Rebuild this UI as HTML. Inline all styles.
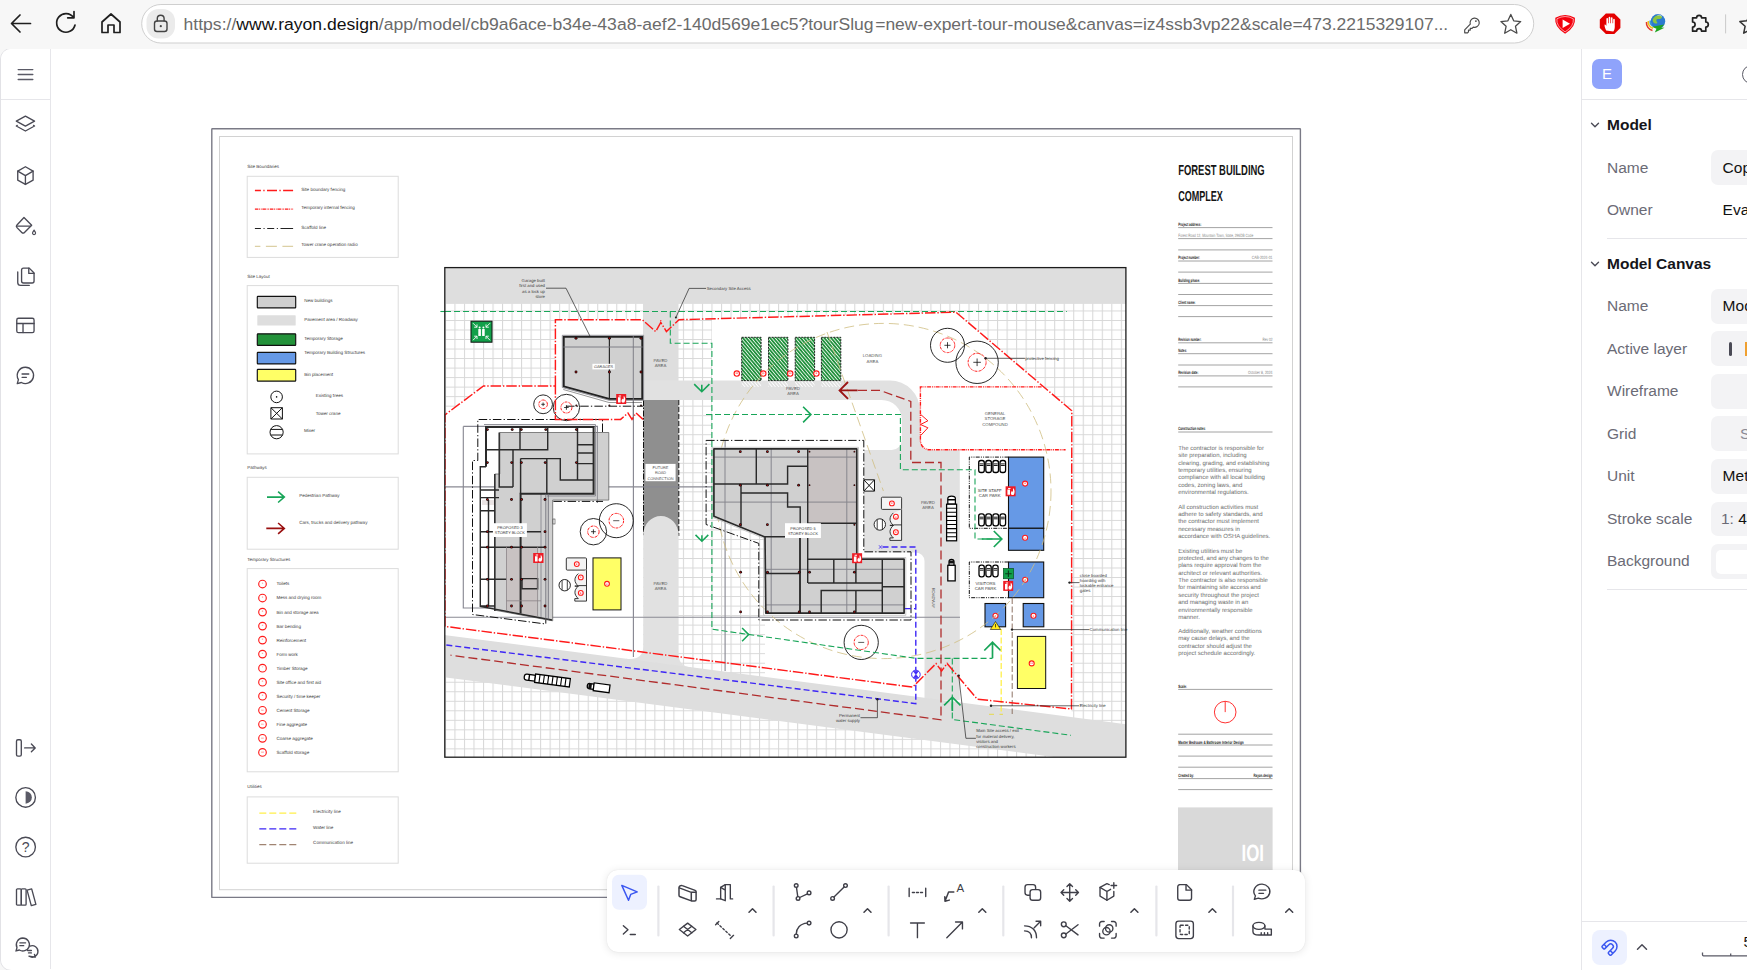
<!DOCTYPE html>
<html lang="en"><head><meta charset="utf-8"><title>Rayon - Forest Building Complex</title>
<style>
*{box-sizing:border-box;margin:0;padding:0}
html,body{width:1747px;height:970px;overflow:hidden;background:#f7f7f7;font-family:"Liberation Sans",sans-serif}
#chrome{position:absolute;left:0;top:0;width:1747px;height:49px;background:#f7f7f7}
#app{position:absolute;left:0;top:48px;width:1760px;height:923px;background:#fff;border:1px solid #e2e2e6;border-top-left-radius:11px;border-bottom-left-radius:11px}
#sidebar{position:absolute;left:1px;top:49px;width:50px;height:920px;background:#fff;border-right:1px solid #e6e6ea;border-top-left-radius:10px;border-bottom-left-radius:10px}
#rpanel{position:absolute;left:0;top:0;width:1747px;height:970px;pointer-events:none}
#rpanel:before{content:"";position:absolute;left:1581px;top:49px;width:166px;height:921px;background:#fff;border-left:1px solid #e6e6ea}
#rpanel .avatar{position:absolute;left:1592.200px;top:59px;width:29.500px;height:29.500px;border-radius:7px;background:#8fa3fb;color:#fff;font-size:15px;text-align:center;line-height:29.500px}
#rpanel .hsep{position:absolute;height:1px;background:#e6e6ea}
#rpanel .hd{position:absolute;left:1607px;font-weight:bold;font-size:15.500px;color:#15151a;line-height:20px;white-space:nowrap}
#rpanel .chev{position:absolute;left:1588.500px}
#rpanel .lbl{position:absolute;left:1607px;font-size:15.500px;color:#6b6b76;line-height:20px;white-space:nowrap}
#rpanel .box{position:absolute;left:1711px;width:60px;border-radius:7px;background:#f3f3f5}
#rpanel .val{position:absolute;font-size:15.500px;line-height:20px;white-space:nowrap}
#toolbar{position:absolute;left:607px;top:870px;width:698px;height:82px;border-radius:11px;background:#fff;box-shadow:0 1px 8px rgba(0,0,0,.10),0 0 1px rgba(0,0,0,.12)}
#canvas{position:absolute;left:0;top:0}
</style></head>
<body>
<div id="app"></div>
<svg id="canvas" width="1747" height="970" viewBox="0 0 1747 970" text-rendering="geometricPrecision"><rect x="211.800" y="128.700" width="1088.600" height="768.700" fill="#fff" stroke="#7a7a86" stroke-width="1.400" rx="0.500"/><rect x="219.500" y="136.500" width="1073" height="753.200" fill="none" stroke="#d2d2d2" stroke-width="1"/><text x="247.2" y="168.3" font-size="4.5" text-anchor="start" fill="#3c3c3c" font-family="Liberation Sans, sans-serif" >Site Boundaries</text><rect x="247.2" y="176.3" width="151" height="81.1" fill="#fff" stroke="#dcdcdc" stroke-width="1"/><path d="M254.900 190.500H293.100" stroke="#ff1a1a" stroke-width="1.300" stroke-dasharray="6 2.400 1.300 2.400 10 2.400 1.300 2.400 13 0" fill="none"/><path d="M254.900 209.200H293.100" stroke="#ff1a1a" stroke-width="1.300" stroke-dasharray="3.500 0.800 0.800 0.800 0.800 0.800" fill="none"/><path d="M254.900 228.500H293.100" stroke="#222" stroke-width="1.200" stroke-dasharray="6 2.600 1.100 2.600 7 2.600 1.100 2.600 13 0" fill="none"/><path d="M254.900 246.300H293.100" stroke="#cfbe82" stroke-width="0.9" stroke-dasharray="5.500 5.500 11 5.500 11 0" fill="none"/><text x="301.3" y="190.9" font-size="4.55" text-anchor="start" fill="#3c3c3c" font-family="Liberation Sans, sans-serif" >Site boundary fencing</text><text x="301.3" y="209.2" font-size="4.55" text-anchor="start" fill="#3c3c3c" font-family="Liberation Sans, sans-serif" >Temporary internal fencing</text><text x="301.3" y="228.5" font-size="4.55" text-anchor="start" fill="#3c3c3c" font-family="Liberation Sans, sans-serif" >Scaffold line</text><text x="301.3" y="246.0" font-size="4.55" text-anchor="start" fill="#3c3c3c" font-family="Liberation Sans, sans-serif" >Tower crane operation radio</text><text x="247.2" y="277.7" font-size="4.5" text-anchor="start" fill="#3c3c3c" font-family="Liberation Sans, sans-serif" >Site Layout</text><rect x="247.2" y="285.6" width="151" height="168.3" fill="#fff" stroke="#dcdcdc" stroke-width="1"/><rect x="257.300" y="296.3" width="38.400" height="11.5" rx="0.600" fill="#cfcfcf" stroke="#111" stroke-width="1.150"/><rect x="257.300" y="315.3" width="38.400" height="10.3" rx="0.600" fill="#dedede"/><rect x="257.300" y="333.8" width="38.400" height="11.5" rx="0.600" fill="#23923a" stroke="#111" stroke-width="1.150"/><rect x="257.300" y="352.4" width="38.400" height="11.5" rx="0.600" fill="#6699e6" stroke="#111" stroke-width="1.150"/><rect x="257.300" y="369.4" width="38.400" height="11.7" rx="0.600" fill="#ffff66" stroke="#111" stroke-width="1.150"/><text x="304.2" y="301.5" font-size="4.55" text-anchor="start" fill="#3c3c3c" font-family="Liberation Sans, sans-serif" >New buildings</text><text x="304.2" y="320.7" font-size="4.55" text-anchor="start" fill="#3c3c3c" font-family="Liberation Sans, sans-serif" >Pavement area / Roadway</text><text x="304.2" y="339.6" font-size="4.55" text-anchor="start" fill="#3c3c3c" font-family="Liberation Sans, sans-serif" >Temporary Storage</text><text x="304.2" y="353.5" font-size="4.55" text-anchor="start" fill="#3c3c3c" font-family="Liberation Sans, sans-serif" >Temporary Building Structures</text><text x="304.2" y="376.1" font-size="4.55" text-anchor="start" fill="#3c3c3c" font-family="Liberation Sans, sans-serif" >Bin placement</text><circle cx="276.600" cy="396.900" r="5.800" fill="#fff" stroke="#111" stroke-width="1"/><circle cx="276.600" cy="396.900" r="0.8" fill="#111"/><path d="M270.900 407.700h11.500v11.300h-11.500zM270.900 407.700l11.500 11.300M282.400 407.700l-11.500 11.300" fill="#fff" stroke="#111" stroke-width="1"/><circle cx="276.600" cy="432.200" r="6.600" fill="#fff" stroke="#111" stroke-width="1"/><path d="M270.600 429.400h12M270.600 435h12" stroke="#111" stroke-width="1"/><text x="315.7" y="396.9" font-size="4.55" text-anchor="start" fill="#3c3c3c" font-family="Liberation Sans, sans-serif" >Existing trees</text><text x="315.7" y="414.5" font-size="4.55" text-anchor="start" fill="#3c3c3c" font-family="Liberation Sans, sans-serif" >Tower crane</text><text x="304.0" y="432.4" font-size="4.55" text-anchor="start" fill="#3c3c3c" font-family="Liberation Sans, sans-serif" >Mixer</text><text x="247.2" y="469.4" font-size="4.5" text-anchor="start" fill="#3c3c3c" font-family="Liberation Sans, sans-serif" >Pathways</text><rect x="247.2" y="477.3" width="151" height="71.9" fill="#fff" stroke="#dcdcdc" stroke-width="1"/><path d="M267 497.100H283.800M278.100 491.700l6.200 5.400-6.200 5.400" fill="none" stroke="#18a558" stroke-width="1.600"/><path d="M266.300 528.400H283.800M278.100 523l6.200 5.400-6.200 5.400" fill="none" stroke="#9a1010" stroke-width="1.600"/><text x="299.2" y="497.2" font-size="4.55" text-anchor="start" fill="#3c3c3c" font-family="Liberation Sans, sans-serif" >Pedestrian Pathway</text><text x="299.2" y="524.1" font-size="4.55" text-anchor="start" fill="#3c3c3c" font-family="Liberation Sans, sans-serif" >Cars, trucks and delivery pathway</text><text x="247.2" y="560.8" font-size="4.5" text-anchor="start" fill="#3c3c3c" font-family="Liberation Sans, sans-serif" >Temporary Structures</text><rect x="247.2" y="568.6" width="151" height="203.2" fill="#fff" stroke="#dcdcdc" stroke-width="1"/><circle cx="262.500" cy="584.0" r="3.800" fill="#fff" stroke="#ff1a1a" stroke-width="1.150"/><text x="262.5" y="584.2" font-size="2.2" text-anchor="middle" fill="#ff1a1a" font-family="Liberation Sans, sans-serif" >1</text><text x="276.4" y="585.4" font-size="4.55" text-anchor="start" fill="#3c3c3c" font-family="Liberation Sans, sans-serif" >Toilets</text><circle cx="262.500" cy="598.0" r="3.800" fill="#fff" stroke="#ff1a1a" stroke-width="1.150"/><text x="262.5" y="598.2" font-size="2.2" text-anchor="middle" fill="#ff1a1a" font-family="Liberation Sans, sans-serif" >2</text><text x="276.4" y="599.4" font-size="4.55" text-anchor="start" fill="#3c3c3c" font-family="Liberation Sans, sans-serif" >Mess and drying room</text><circle cx="262.500" cy="612.1" r="3.800" fill="#fff" stroke="#ff1a1a" stroke-width="1.150"/><text x="262.5" y="612.3" font-size="2.2" text-anchor="middle" fill="#ff1a1a" font-family="Liberation Sans, sans-serif" >3</text><text x="276.4" y="613.5" font-size="4.55" text-anchor="start" fill="#3c3c3c" font-family="Liberation Sans, sans-serif" >Bin and storage area</text><circle cx="262.500" cy="626.1" r="3.800" fill="#fff" stroke="#ff1a1a" stroke-width="1.150"/><text x="262.5" y="626.3" font-size="2.2" text-anchor="middle" fill="#ff1a1a" font-family="Liberation Sans, sans-serif" >4</text><text x="276.4" y="627.5" font-size="4.55" text-anchor="start" fill="#3c3c3c" font-family="Liberation Sans, sans-serif" >Bar bending</text><circle cx="262.500" cy="640.1" r="3.800" fill="#fff" stroke="#ff1a1a" stroke-width="1.150"/><text x="262.5" y="640.3" font-size="2.2" text-anchor="middle" fill="#ff1a1a" font-family="Liberation Sans, sans-serif" >5</text><text x="276.4" y="641.5" font-size="4.55" text-anchor="start" fill="#3c3c3c" font-family="Liberation Sans, sans-serif" >Reinforcement</text><circle cx="262.500" cy="654.1" r="3.800" fill="#fff" stroke="#ff1a1a" stroke-width="1.150"/><text x="262.5" y="654.4" font-size="2.2" text-anchor="middle" fill="#ff1a1a" font-family="Liberation Sans, sans-serif" >6</text><text x="276.4" y="655.5" font-size="4.55" text-anchor="start" fill="#3c3c3c" font-family="Liberation Sans, sans-serif" >Form work</text><circle cx="262.500" cy="668.2" r="3.800" fill="#fff" stroke="#ff1a1a" stroke-width="1.150"/><text x="262.5" y="668.4" font-size="2.2" text-anchor="middle" fill="#ff1a1a" font-family="Liberation Sans, sans-serif" >7</text><text x="276.4" y="669.6" font-size="4.55" text-anchor="start" fill="#3c3c3c" font-family="Liberation Sans, sans-serif" >Timber Storage</text><circle cx="262.500" cy="682.2" r="3.800" fill="#fff" stroke="#ff1a1a" stroke-width="1.150"/><text x="262.5" y="682.4" font-size="2.2" text-anchor="middle" fill="#ff1a1a" font-family="Liberation Sans, sans-serif" >8</text><text x="276.4" y="683.6" font-size="4.55" text-anchor="start" fill="#3c3c3c" font-family="Liberation Sans, sans-serif" >Site office and first aid</text><circle cx="262.500" cy="696.2" r="3.800" fill="#fff" stroke="#ff1a1a" stroke-width="1.150"/><text x="262.5" y="696.4" font-size="2.2" text-anchor="middle" fill="#ff1a1a" font-family="Liberation Sans, sans-serif" >9</text><text x="276.4" y="697.6" font-size="4.55" text-anchor="start" fill="#3c3c3c" font-family="Liberation Sans, sans-serif" >Security / time keeper</text><circle cx="262.500" cy="710.3" r="3.800" fill="#fff" stroke="#ff1a1a" stroke-width="1.150"/><text x="262.5" y="710.5" font-size="2.2" text-anchor="middle" fill="#ff1a1a" font-family="Liberation Sans, sans-serif" >10</text><text x="276.4" y="711.7" font-size="4.55" text-anchor="start" fill="#3c3c3c" font-family="Liberation Sans, sans-serif" >Cement Storage</text><circle cx="262.500" cy="724.3" r="3.800" fill="#fff" stroke="#ff1a1a" stroke-width="1.150"/><text x="262.5" y="724.5" font-size="2.2" text-anchor="middle" fill="#ff1a1a" font-family="Liberation Sans, sans-serif" >11</text><text x="276.4" y="725.7" font-size="4.55" text-anchor="start" fill="#3c3c3c" font-family="Liberation Sans, sans-serif" >Fine aggregate</text><circle cx="262.500" cy="738.3" r="3.800" fill="#fff" stroke="#ff1a1a" stroke-width="1.150"/><text x="262.5" y="738.5" font-size="2.2" text-anchor="middle" fill="#ff1a1a" font-family="Liberation Sans, sans-serif" >12</text><text x="276.4" y="739.7" font-size="4.55" text-anchor="start" fill="#3c3c3c" font-family="Liberation Sans, sans-serif" >Coarse aggregate</text><circle cx="262.500" cy="752.4" r="3.800" fill="#fff" stroke="#ff1a1a" stroke-width="1.150"/><text x="262.5" y="752.6" font-size="2.2" text-anchor="middle" fill="#ff1a1a" font-family="Liberation Sans, sans-serif" >13</text><text x="276.4" y="753.8" font-size="4.55" text-anchor="start" fill="#3c3c3c" font-family="Liberation Sans, sans-serif" >Scaffold storage</text><text x="247.2" y="788.1" font-size="4.5" text-anchor="start" fill="#3c3c3c" font-family="Liberation Sans, sans-serif" >Utilities</text><rect x="247.2" y="796.9" width="151" height="66.3" fill="#fff" stroke="#dcdcdc" stroke-width="1"/><path d="M259.300 813.1H296.400" stroke="#fff04a" stroke-width="1.200" stroke-dasharray="7 3" fill="none"/><text x="313.1" y="812.7" font-size="4.55" text-anchor="start" fill="#3c3c3c" font-family="Liberation Sans, sans-serif" >Electricity line</text><path d="M259.300 828.9H296.400" stroke="#3d26f5" stroke-width="1.200" stroke-dasharray="7 3" fill="none"/><text x="313.1" y="828.5" font-size="4.55" text-anchor="start" fill="#3c3c3c" font-family="Liberation Sans, sans-serif" >Water line</text><path d="M259.300 844.7H296.400" stroke="#a08472" stroke-width="1.200" stroke-dasharray="7 3" fill="none"/><text x="313.1" y="844.3" font-size="4.55" text-anchor="start" fill="#3c3c3c" font-family="Liberation Sans, sans-serif" >Communication line</text><defs><clipPath id="fr"><rect x="444.8" y="267.6" width="681.1" height="489.6"/></clipPath><pattern id="grid" x="444.900" y="300.960" width="9.520" height="9.520" patternUnits="userSpaceOnUse"><path d="M0.500 0V9.520M0 0.500H9.520" stroke="#d8d8d8" stroke-width="1.100" fill="none"/></pattern><pattern id="hat" width="2.600" height="2.600" patternUnits="userSpaceOnUse" patternTransform="rotate(50)"><rect width="2.600" height="2.600" fill="#1e8f3a"/><rect width="2.600" height="0.9" fill="#e9f5ea"/></pattern><pattern id="hatw" width="2.600" height="2.600" patternUnits="userSpaceOnUse" patternTransform="rotate(50)"><rect width="2.600" height="2.600" fill="#e0e0e0"/><rect width="2.600" height="0.9" fill="#fff"/></pattern></defs><rect x="444.8" y="267.6" width="681.1" height="489.6" fill="#fff"/><g clip-path="url(#fr)"><rect x="444.8" y="267.6" width="681.1" height="489.6" fill="url(#grid)"/><polygon points="445,414.800 483.500,386 555.400,386 555.400,319.700 643,319.700 643,662 445,636" fill="#fff"/><polygon points="712,318.800 956,312.200 1071.800,410.800 1071.500,720 765,680 765,537.100 712,516.300" fill="#fff"/><rect x="444.8" y="267.6" width="681.1" height="36.3" fill="#dedede"/><rect x="643" y="303" width="35.500" height="78" fill="#dedede"/><path d="M643 380.500H889.900A30 30 0 0 1 919.900 410.500V441a9.300 9.300 0 0 0 9.300 9.300H959.800V700H924.500V561a8.600 8.600 0 0 0-8.600-8.600H864V450H891.800a10 10 0 0 0 10-10V420a20 20 0 0 0-20-20H643z" fill="#e1e1e1"/><rect x="643.500" y="400" width="35" height="136" fill="#8f8f8f"/><path d="M643.500 400V536" stroke="#111" stroke-width="1" stroke-dasharray="6 1.500 1.500 1.500" fill="none"/><path d="M678.800 400V536" stroke="#111" stroke-width="1" stroke-dasharray="5 2" fill="none"/><path d="M643.200 535A17.700 19 0 0 1 678.600 535V654Q678.800 666.500 691 667.300V676H626V658.800Q643.200 660.500 643.200 647z" fill="#e1e1e1"/><polygon points="444,634.9 1127,724.3 1127,766.6 444,677.2" fill="#dedede"/><path d="M445 486.900H712M445 617.200H960M633.400 336V657M725.100 440V671M463.300 426.400H597.400V503M463.300 426.400V608H500" stroke="#8a8a94" stroke-width="1.150" fill="none"/><rect x="741.7" y="380.600" width="19.400" height="6.300" fill="url(#hatw)"/><rect x="741.7" y="337.300" width="19.400" height="43.300" fill="url(#hat)" stroke="#111" stroke-width="0.9" stroke-dasharray="2 1"/><rect x="768.5" y="380.600" width="19.400" height="6.300" fill="url(#hatw)"/><rect x="768.5" y="337.300" width="19.400" height="43.300" fill="url(#hat)" stroke="#111" stroke-width="0.9" stroke-dasharray="2 1"/><rect x="795.2" y="380.600" width="19.400" height="6.300" fill="url(#hatw)"/><rect x="795.2" y="337.300" width="19.400" height="43.300" fill="url(#hat)" stroke="#111" stroke-width="0.9" stroke-dasharray="2 1"/><rect x="821.4" y="380.600" width="19.400" height="6.300" fill="url(#hatw)"/><rect x="821.4" y="337.300" width="19.400" height="43.300" fill="url(#hat)" stroke="#111" stroke-width="0.9" stroke-dasharray="2 1"/><circle cx="736.8" cy="373.6" r="2.7" fill="#fff" stroke="#ff1a1a" stroke-width="1.100"/><text x="736.8" y="374.45" font-size="2.500" font-weight="bold" text-anchor="middle" fill="#ff1a1a" font-family="Liberation Sans, sans-serif">10</text><circle cx="763.3" cy="373.6" r="2.7" fill="#fff" stroke="#ff1a1a" stroke-width="1.100"/><text x="763.3" y="374.45" font-size="2.500" font-weight="bold" text-anchor="middle" fill="#ff1a1a" font-family="Liberation Sans, sans-serif">11</text><circle cx="790.2" cy="373.6" r="2.7" fill="#fff" stroke="#ff1a1a" stroke-width="1.100"/><text x="790.2" y="374.45" font-size="2.500" font-weight="bold" text-anchor="middle" fill="#ff1a1a" font-family="Liberation Sans, sans-serif">12</text><circle cx="816.4" cy="373.6" r="2.7" fill="#fff" stroke="#ff1a1a" stroke-width="1.100"/><text x="816.4" y="374.45" font-size="2.500" font-weight="bold" text-anchor="middle" fill="#ff1a1a" font-family="Liberation Sans, sans-serif">6</text><rect x="1008.5" y="457.1" width="35.2" height="71.2" fill="#6699e6" stroke="#111" stroke-width="1.100"/><rect x="1008.5" y="528.3" width="35.2" height="22" fill="#6699e6" stroke="#111" stroke-width="1.100"/><rect x="1008.5" y="562" width="35.2" height="35.7" fill="#6699e6" stroke="#111" stroke-width="1.100"/><rect x="985" y="603.5" width="20.6" height="23.3" fill="#6699e6" stroke="#111" stroke-width="1.100"/><rect x="1023.2" y="603.5" width="20.6" height="23.3" fill="#6699e6" stroke="#111" stroke-width="1.100"/><circle cx="1025.1" cy="483.6" r="2.5" fill="#fff" stroke="#ff1a1a" stroke-width="1.100"/><text x="1025.1" y="484.45" font-size="2.500" font-weight="bold" text-anchor="middle" fill="#ff1a1a" font-family="Liberation Sans, sans-serif">8</text><circle cx="1025.1" cy="537.7" r="2.5" fill="#fff" stroke="#ff1a1a" stroke-width="1.100"/><text x="1025.1" y="538.55" font-size="2.500" font-weight="bold" text-anchor="middle" fill="#ff1a1a" font-family="Liberation Sans, sans-serif">2</text><circle cx="1025.2" cy="579.8" r="2.5" fill="#fff" stroke="#ff1a1a" stroke-width="1.100"/><text x="1025.2" y="580.65" font-size="2.500" font-weight="bold" text-anchor="middle" fill="#ff1a1a" font-family="Liberation Sans, sans-serif">9</text><circle cx="995.5" cy="615.8" r="2.5" fill="#fff" stroke="#ff1a1a" stroke-width="1.100"/><text x="995.5" y="616.65" font-size="2.500" font-weight="bold" text-anchor="middle" fill="#ff1a1a" font-family="Liberation Sans, sans-serif">1</text><circle cx="1033.5" cy="615.8" r="2.5" fill="#fff" stroke="#ff1a1a" stroke-width="1.100"/><text x="1033.5" y="616.65" font-size="2.500" font-weight="bold" text-anchor="middle" fill="#ff1a1a" font-family="Liberation Sans, sans-serif">1</text><rect x="593" y="557.900" width="28" height="52" fill="#ffff66" stroke="#111" stroke-width="1"/><circle cx="607.0" cy="583.8" r="2.4" fill="#fff" stroke="#ff1a1a" stroke-width="1.100"/><text x="607.0" y="584.65" font-size="2.500" font-weight="bold" text-anchor="middle" fill="#ff1a1a" font-family="Liberation Sans, sans-serif">3</text><rect x="1017.400" y="636.400" width="28.300" height="52.100" fill="#ffff66" stroke="#111" stroke-width="1"/><circle cx="1031.7" cy="663.4" r="2.5" fill="#fff" stroke="#ff1a1a" stroke-width="1.100"/><text x="1031.7" y="664.25" font-size="2.500" font-weight="bold" text-anchor="middle" fill="#ff1a1a" font-family="Liberation Sans, sans-serif">13</text><circle cx="883.400" cy="491" r="167.600" fill="none" stroke="#cfbe82" stroke-width="0.8" stroke-dasharray="10 5"/><path d="M827 332L883.400 491" fill="none" stroke="#cfbe82" stroke-width="0.8" stroke-dasharray="10 5"/><polygon points="562.300,335.300 643.600,335.300 643.600,400.300 609.100,400.300 562.300,387.500" fill="#d0d0d0" stroke="#8a8a92" stroke-width="0.900"/><polygon points="563.800,336.800 642.200,336.800 642.200,398.800 609.300,398.800 563.800,386.300" fill="none" stroke="#222" stroke-width="1.800"/><path d="M609.400 337V398.600" stroke="#2a2a2a" stroke-width="1.200"/><path d="M563.300 347H642.600M633.300 336V420" stroke="#77777f" stroke-width="0.9" fill="none"/><path d="M563.300 389.500L609 402.500H642" stroke="#333" stroke-width="0.5" fill="none"/><circle cx="576.0" cy="338.2" r="1.45" fill="#1a0a0a"/><circle cx="576.0" cy="338.2" r="0.65" fill="#c01010"/><circle cx="576.0" cy="372.0" r="1.45" fill="#1a0a0a"/><circle cx="576.0" cy="372.0" r="0.65" fill="#c01010"/><circle cx="609.4" cy="338.2" r="1.45" fill="#1a0a0a"/><circle cx="609.4" cy="338.2" r="0.65" fill="#c01010"/><circle cx="609.4" cy="372.0" r="1.45" fill="#1a0a0a"/><circle cx="609.4" cy="372.0" r="0.65" fill="#c01010"/><circle cx="641.0" cy="338.2" r="1.45" fill="#1a0a0a"/><circle cx="641.0" cy="338.2" r="0.65" fill="#c01010"/><circle cx="641.0" cy="372.0" r="1.45" fill="#1a0a0a"/><circle cx="641.0" cy="372.0" r="0.65" fill="#c01010"/><circle cx="576.3" cy="405.6" r="1.0" fill="#1a0a0a"/><circle cx="576.3" cy="405.6" r="0.45" fill="#c01010"/><circle cx="609.4" cy="405.6" r="1.0" fill="#1a0a0a"/><circle cx="609.4" cy="405.6" r="0.45" fill="#c01010"/><circle cx="641.0" cy="405.6" r="1.0" fill="#1a0a0a"/><circle cx="641.0" cy="405.6" r="0.45" fill="#c01010"/><rect x="592.400" y="363.800" width="22.400" height="5.600" fill="#fff"/><text x="603.6" y="368.2" font-size="3.9" text-anchor="middle" fill="#3c3c3c" font-family="Liberation Sans, sans-serif" >GARAGES</text><rect x="616.2" y="394.0" width="10" height="10" fill="#ee1c25"/><path d="M618.0 397.2h2.600v5.300h-2.600zM618.7 395.6h2.400v1h-2.400z" fill="#fff"/><path d="M622.2 402.6c-1.500-1.500-.300-3 .300-4.200.300 1 .800 1.200 1.100.600.200-1.200-.200-2 .300-3.300 1.400 1.800 2 4.800.300 6.900z" fill="#fff"/><polygon points="499.800,432.500 608.800,432.500 608.800,500.100 552.700,500.100 552.700,620.800 494.800,610.200 494.800,474 499.800,474" fill="#d0d0d0" stroke="#555" stroke-width="0.7"/><polygon points="506.500,546.500 537.600,546.500 537.600,616.500 506.500,611" fill="#c8c2c2"/><rect x="482" y="500" width="12" height="5" fill="#eae4e4"/><path d="M484 424.500H595.500V496H547M597.400 432V503M541 493.800V618" stroke="#888890" stroke-width="0.9" fill="none"/><path d="M486 466.700V427H593.600V493.800H520.600V613.600" fill="none" stroke="#2a2a2a" stroke-width="2" stroke-linejoin="miter"/><path d="M486 466.700H480.300M486 466.700H480.300V606.500L552 620M520 427V449.700M486 449.700H547.700V427M520.600 458.600H560.300V480H593.600M577.500 427V480M577.500 444.700H593.600M577.500 452.900H593.600M577.500 463.600H593.600M546.800 458.600V493.800M513 449.700V487M499.200 432.500V487H513M520.600 458.600V493.800M480.300 490H499M480.300 497.600H499M480.300 510.800H494.800M480.300 531.700H520.600M480.300 547.200H545M480.300 579.300H506.500M480.300 606H494.800M494.800 474V611M488.500 500V606M520.600 531.700H541M521.200 578.600H537.600V588.700H522V578.600" fill="none" stroke="#2a2a2a" stroke-width="1.450"/><path d="M545.800 493.800V619M548.300 493.800V619.500" stroke="#666670" stroke-width="0.8" fill="none"/><path d="M506.500 546.500V611M537.600 546.500V616M506.500 600.800H541" stroke="#8a8488" stroke-width="0.8" fill="none"/><circle cx="487.4" cy="429.6" r="1.4" fill="#1a0a0a"/><circle cx="487.4" cy="429.6" r="0.63" fill="#c01010"/><circle cx="512.2" cy="429.6" r="1.4" fill="#1a0a0a"/><circle cx="512.2" cy="429.6" r="0.63" fill="#c01010"/><circle cx="521.3" cy="429.6" r="1.4" fill="#1a0a0a"/><circle cx="521.3" cy="429.6" r="0.63" fill="#c01010"/><circle cx="545.8" cy="429.6" r="1.4" fill="#1a0a0a"/><circle cx="545.8" cy="429.6" r="0.63" fill="#c01010"/><circle cx="576.4" cy="429.6" r="1.4" fill="#1a0a0a"/><circle cx="576.4" cy="429.6" r="0.63" fill="#c01010"/><circle cx="487.4" cy="462.6" r="1.4" fill="#1a0a0a"/><circle cx="487.4" cy="462.6" r="0.63" fill="#c01010"/><circle cx="511.7" cy="462.6" r="1.4" fill="#1a0a0a"/><circle cx="511.7" cy="462.6" r="0.63" fill="#c01010"/><circle cx="521.4" cy="462.6" r="1.4" fill="#1a0a0a"/><circle cx="521.4" cy="462.6" r="0.63" fill="#c01010"/><circle cx="545.2" cy="462.6" r="1.4" fill="#1a0a0a"/><circle cx="545.2" cy="462.6" r="0.63" fill="#c01010"/><circle cx="576.4" cy="462.6" r="1.4" fill="#1a0a0a"/><circle cx="576.4" cy="462.6" r="0.63" fill="#c01010"/><circle cx="487.4" cy="499.5" r="1.4" fill="#1a0a0a"/><circle cx="487.4" cy="499.5" r="0.63" fill="#c01010"/><circle cx="511.5" cy="499.5" r="1.4" fill="#1a0a0a"/><circle cx="511.5" cy="499.5" r="0.63" fill="#c01010"/><circle cx="521.6" cy="499.5" r="1.4" fill="#1a0a0a"/><circle cx="521.6" cy="499.5" r="0.63" fill="#c01010"/><circle cx="545.0" cy="499.5" r="1.4" fill="#1a0a0a"/><circle cx="545.0" cy="499.5" r="0.63" fill="#c01010"/><circle cx="487.4" cy="531.7" r="1.4" fill="#1a0a0a"/><circle cx="487.4" cy="531.7" r="0.63" fill="#c01010"/><circle cx="545.0" cy="531.7" r="1.4" fill="#1a0a0a"/><circle cx="545.0" cy="531.7" r="0.63" fill="#c01010"/><circle cx="487.4" cy="547.2" r="1.4" fill="#1a0a0a"/><circle cx="487.4" cy="547.2" r="0.63" fill="#c01010"/><circle cx="511.5" cy="547.2" r="1.4" fill="#1a0a0a"/><circle cx="511.5" cy="547.2" r="0.63" fill="#c01010"/><circle cx="521.6" cy="547.2" r="1.4" fill="#1a0a0a"/><circle cx="521.6" cy="547.2" r="0.63" fill="#c01010"/><circle cx="545.0" cy="547.2" r="1.4" fill="#1a0a0a"/><circle cx="545.0" cy="547.2" r="0.63" fill="#c01010"/><circle cx="487.4" cy="579.3" r="1.4" fill="#1a0a0a"/><circle cx="487.4" cy="579.3" r="0.63" fill="#c01010"/><circle cx="511.5" cy="579.3" r="1.4" fill="#1a0a0a"/><circle cx="511.5" cy="579.3" r="0.63" fill="#c01010"/><circle cx="521.6" cy="579.3" r="1.4" fill="#1a0a0a"/><circle cx="521.6" cy="579.3" r="0.63" fill="#c01010"/><circle cx="545.0" cy="579.3" r="1.4" fill="#1a0a0a"/><circle cx="545.0" cy="579.3" r="0.63" fill="#c01010"/><circle cx="487.4" cy="606.0" r="1.4" fill="#1a0a0a"/><circle cx="487.4" cy="606.0" r="0.63" fill="#c01010"/><circle cx="511.5" cy="606.0" r="1.4" fill="#1a0a0a"/><circle cx="511.5" cy="606.0" r="0.63" fill="#c01010"/><circle cx="521.6" cy="606.0" r="1.4" fill="#1a0a0a"/><circle cx="521.6" cy="606.0" r="0.63" fill="#c01010"/><circle cx="545.0" cy="606.0" r="1.4" fill="#1a0a0a"/><circle cx="545.0" cy="606.0" r="0.63" fill="#c01010"/><rect x="492.900" y="523.200" width="34" height="13.800" fill="#fff"/><text x="509.9" y="529.0" font-size="3.9" text-anchor="middle" fill="#3c3c3c" font-family="Liberation Sans, sans-serif" >PROPOSED 3</text><text x="509.9" y="534.2" font-size="3.9" text-anchor="middle" fill="#3c3c3c" font-family="Liberation Sans, sans-serif" >STOREY BLOCK</text><rect x="533.2" y="553.0" width="10.3" height="10" fill="#ee1c25"/><path d="M535.0 556.2h2.600v5.300h-2.600zM535.7 554.6h2.400v1h-2.400z" fill="#fff"/><path d="M539.2 561.6c-1.500-1.500-.300-3 .300-4.200.300 1 .800 1.200 1.100.600.200-1.200-.200-2 .300-3.300 1.400 1.800 2 4.800.300 6.900z" fill="#fff"/><rect x="553" y="519" width="2" height="5" fill="#fff" stroke="#222" stroke-width="0.5"/><path d="M602.500 432V419.500H477.800V460.500H472.500V614.500L545.800 624V620" stroke="#111" stroke-width="1" stroke-dasharray="8.500 2.200 1.300 2.200" fill="none"/><path d="M553.400 501.400H603" stroke="#111" stroke-width="1" stroke-dasharray="8.500 2.200 1.300 2.200" fill="none"/><path d="M566 406.200H643" stroke="#111" stroke-width="1" stroke-dasharray="8.500 2.200 1.300 2.200" fill="none"/><polygon points="712.300,447.300 858.500,447.300 858.500,557.500 905.800,557.500 905.800,615.300 763.600,615.300 763.600,538.200 712.300,517.300" fill="none" stroke="#bdbdbd" stroke-width="0.8"/><polygon points="713.900,448.900 856.800,448.900 856.800,559.200 904.100,559.200 904.100,613.100 765.800,613.100 765,537.100 713.900,516.300" fill="#d0d0d0"/><rect x="807.700" y="448.900" width="49.100" height="74.300" fill="#c8c2c2"/><path d="M713.900 457.100H856.800M713.900 502.100H856.800M725 448.900V521M771.200 448.900V613M846.800 448.900V613M765.800 569.300H904M765.800 604.900H904" stroke="#86868e" stroke-width="1" fill="none"/><polygon points="713.900,448.900 856.800,448.900 856.800,559.200 904.100,559.200 904.100,613.100 765.800,613.100 765,537.100 713.900,516.300" fill="none" stroke="#2a2a2a" stroke-width="1.700" stroke-linejoin="round"/><path d="M756.300 448.900V483.900M713.900 483.900H787.600V466.300H807.700M807.700 448.900V582.900M741 483.900V526.500M741 493H787.600V506.900H800.200V613M765 536.800H785M807.700 523.200H856.800M808 559.200H856.800M808 582.900H882.300M882.300 559.200V613.100M833.800 559.200V582.900M855.900 559.200V582.900M821.200 613V590.500H882.300M855.900 590.500V613M882.300 586.700H904.100M799.800 537V613.100M765.800 573.400H799.800" fill="none" stroke="#2a2a2a" stroke-width="1.450"/><circle cx="740.3" cy="451.7" r="1.4" fill="#1a0a0a"/><circle cx="740.3" cy="451.7" r="0.63" fill="#c01010"/><circle cx="767.4" cy="451.7" r="1.4" fill="#1a0a0a"/><circle cx="767.4" cy="451.7" r="0.63" fill="#c01010"/><circle cx="798.6" cy="451.7" r="1.4" fill="#1a0a0a"/><circle cx="798.6" cy="451.7" r="0.63" fill="#c01010"/><circle cx="740.3" cy="485.2" r="1.4" fill="#1a0a0a"/><circle cx="740.3" cy="485.2" r="0.63" fill="#c01010"/><circle cx="767.4" cy="485.2" r="1.4" fill="#1a0a0a"/><circle cx="767.4" cy="485.2" r="0.63" fill="#c01010"/><circle cx="798.6" cy="485.2" r="1.4" fill="#1a0a0a"/><circle cx="798.6" cy="485.2" r="0.63" fill="#c01010"/><circle cx="740.3" cy="524.7" r="1.4" fill="#1a0a0a"/><circle cx="740.3" cy="524.7" r="0.63" fill="#c01010"/><circle cx="767.4" cy="524.7" r="1.4" fill="#1a0a0a"/><circle cx="767.4" cy="524.7" r="0.63" fill="#c01010"/><circle cx="740.6" cy="572.2" r="1.4" fill="#1a0a0a"/><circle cx="740.6" cy="572.2" r="0.63" fill="#c01010"/><circle cx="767.5" cy="572.2" r="1.4" fill="#1a0a0a"/><circle cx="767.5" cy="572.2" r="0.63" fill="#c01010"/><circle cx="799.2" cy="572.2" r="1.4" fill="#1a0a0a"/><circle cx="799.2" cy="572.2" r="0.63" fill="#c01010"/><circle cx="809.5" cy="572.2" r="1.4" fill="#1a0a0a"/><circle cx="809.5" cy="572.2" r="0.63" fill="#c01010"/><circle cx="854.4" cy="572.2" r="1.4" fill="#1a0a0a"/><circle cx="854.4" cy="572.2" r="0.63" fill="#c01010"/><circle cx="740.6" cy="611.9" r="1.4" fill="#1a0a0a"/><circle cx="740.6" cy="611.9" r="0.63" fill="#c01010"/><circle cx="767.5" cy="611.9" r="1.4" fill="#1a0a0a"/><circle cx="767.5" cy="611.9" r="0.63" fill="#c01010"/><circle cx="799.2" cy="611.9" r="1.4" fill="#1a0a0a"/><circle cx="799.2" cy="611.9" r="0.63" fill="#c01010"/><circle cx="809.5" cy="611.9" r="1.4" fill="#1a0a0a"/><circle cx="809.5" cy="611.9" r="0.63" fill="#c01010"/><circle cx="854.4" cy="611.9" r="1.4" fill="#1a0a0a"/><circle cx="854.4" cy="611.9" r="0.63" fill="#c01010"/><circle cx="809.5" cy="451.7" r="0.9" fill="#1a0a0a"/><circle cx="809.5" cy="451.7" r="0.41" fill="#c01010"/><circle cx="854.4" cy="451.7" r="0.9" fill="#1a0a0a"/><circle cx="854.4" cy="451.7" r="0.41" fill="#c01010"/><circle cx="809.5" cy="485.2" r="0.9" fill="#1a0a0a"/><circle cx="809.5" cy="485.2" r="0.41" fill="#c01010"/><circle cx="854.4" cy="485.2" r="0.9" fill="#1a0a0a"/><circle cx="854.4" cy="485.2" r="0.41" fill="#c01010"/><circle cx="854.4" cy="524.7" r="1.0" fill="#1a0a0a"/><circle cx="854.4" cy="524.7" r="0.45" fill="#c01010"/><rect x="785" y="523.200" width="35.900" height="14.800" fill="#fff"/><text x="803.0" y="529.5" font-size="3.9" text-anchor="middle" fill="#3c3c3c" font-family="Liberation Sans, sans-serif" >PROPOSED 5</text><text x="803.0" y="534.7" font-size="3.9" text-anchor="middle" fill="#3c3c3c" font-family="Liberation Sans, sans-serif" >STOREY BLOCK</text><rect x="852.1" y="553.2" width="10" height="10" fill="#ee1c25"/><path d="M853.9 556.4h2.600v5.300h-2.600zM854.6 554.8h2.400v1h-2.400z" fill="#fff"/><path d="M858.1 561.8c-1.500-1.500-.300-3 .300-4.200.300 1 .800 1.200 1.100.600.200-1.200-.200-2 .300-3.300 1.400 1.800 2 4.800.300 6.900z" fill="#fff"/><path d="M706.100 440.400H863.800V551.800H911V620H758.800V543.400L706.100 524.500z" stroke="#111" stroke-width="1" stroke-dasharray="8.500 2.200 1.300 2.200" fill="none"/><path d="M1008.500 457.100H969.300V528.300H1008.500" stroke="#111" stroke-width="1" stroke-dasharray="4 1.200 1 1.200 1 1.200" fill="none"/><path d="M1008.500 562H969.300V597.700H1008.500" stroke="#111" stroke-width="1" stroke-dasharray="4 1.200 1 1.200 1 1.200" fill="none"/><rect x="978.7" y="460.5" width="5.6" height="12" rx="2.2" fill="#fff" stroke="#000" stroke-width="1.300"/><path d="M979.5 463.9h4.0M979.5 465.5h4.0" stroke="#000" stroke-width="0.9"/><rect x="978.7" y="513.8" width="5.6" height="12" rx="2.2" fill="#fff" stroke="#000" stroke-width="1.300"/><path d="M979.5 517.2h4.0M979.5 518.8h4.0" stroke="#000" stroke-width="0.9"/><rect x="985.8" y="460.5" width="5.6" height="12" rx="2.2" fill="#fff" stroke="#000" stroke-width="1.300"/><path d="M986.6 463.9h4.0M986.6 465.5h4.0" stroke="#000" stroke-width="0.9"/><rect x="985.8" y="513.8" width="5.6" height="12" rx="2.2" fill="#fff" stroke="#000" stroke-width="1.300"/><path d="M986.6 517.2h4.0M986.6 518.8h4.0" stroke="#000" stroke-width="0.9"/><rect x="992.9" y="460.5" width="5.6" height="12" rx="2.2" fill="#fff" stroke="#000" stroke-width="1.300"/><path d="M993.7 463.9h4.0M993.7 465.5h4.0" stroke="#000" stroke-width="0.9"/><rect x="992.9" y="513.8" width="5.6" height="12" rx="2.2" fill="#fff" stroke="#000" stroke-width="1.300"/><path d="M993.7 517.2h4.0M993.7 518.8h4.0" stroke="#000" stroke-width="0.9"/><rect x="1000.0" y="460.5" width="5.6" height="12" rx="2.2" fill="#fff" stroke="#000" stroke-width="1.300"/><path d="M1000.8 463.9h4.0M1000.8 465.5h4.0" stroke="#000" stroke-width="0.9"/><rect x="1000.0" y="513.8" width="5.6" height="12" rx="2.2" fill="#fff" stroke="#000" stroke-width="1.300"/><path d="M1000.8 517.2h4.0M1000.8 518.8h4.0" stroke="#000" stroke-width="0.9"/><rect x="979.0" y="565.2" width="5.3" height="11.6" rx="2.2" fill="#fff" stroke="#000" stroke-width="1.300"/><path d="M979.8 568.6h3.7M979.8 570.2h3.7" stroke="#000" stroke-width="0.9"/><rect x="985.9" y="565.2" width="5.3" height="11.6" rx="2.2" fill="#fff" stroke="#000" stroke-width="1.300"/><path d="M986.7 568.6h3.7M986.7 570.2h3.7" stroke="#000" stroke-width="0.9"/><rect x="992.8" y="565.2" width="5.3" height="11.6" rx="2.2" fill="#fff" stroke="#000" stroke-width="1.300"/><path d="M993.6 568.6h3.7M993.6 570.2h3.7" stroke="#000" stroke-width="0.9"/><rect x="1005.6" y="486.3" width="10" height="10" fill="#ee1c25"/><path d="M1007.4 489.5h2.600v5.300h-2.600zM1008.1 487.9h2.400v1h-2.400z" fill="#fff"/><path d="M1011.6 494.9c-1.500-1.500-.300-3 .300-4.200.300 1 .800 1.200 1.100.600.200-1.200-.200-2 .300-3.300 1.400 1.800 2 4.800.300 6.900z" fill="#fff"/><rect x="1003.2" y="580.9" width="10" height="10" fill="#ee1c25"/><path d="M1005.0 584.1h2.600v5.300h-2.600zM1005.7 582.5h2.400v1h-2.400z" fill="#fff"/><path d="M1009.2 589.5c-1.500-1.500-.300-3 .300-4.200.300 1 .800 1.200 1.100.600.200-1.200-.200-2 .300-3.300 1.400 1.800 2 4.800.300 6.900z" fill="#fff"/><rect x="1003.500" y="568.600" width="9.900" height="10.100" fill="#12a04a" stroke="#0a5a2a" stroke-width="0.8"/><path d="M1008.400 570.500v6.500M1005.200 573.700h6.500" stroke="#0a3a1a" stroke-width="1.100"/><text x="989.7" y="491.8" font-size="4.3" text-anchor="middle" fill="#3c3c3c" font-family="Liberation Sans, sans-serif" >SITE STAFF</text><text x="989.7" y="496.9" font-size="4.3" text-anchor="middle" fill="#3c3c3c" font-family="Liberation Sans, sans-serif" >CAR PARK</text><text x="985.5" y="584.9" font-size="4.3" text-anchor="middle" fill="#3c3c3c" font-family="Liberation Sans, sans-serif" >VISITORS</text><text x="985.5" y="590.0" font-size="4.3" text-anchor="middle" fill="#3c3c3c" font-family="Liberation Sans, sans-serif" >CAR PARK</text><rect x="566.3" y="557.9" width="20.2" height="12.2" rx="1" fill="#f3f3f3" stroke="#222" stroke-width="0.9"/><path d="M586.5 570.1v31H574.8v-2.500h3.500c-4.500-4-4.500-8.500 0-12.500h-3.500 3.500c-4.500-4-4.500-8.500 0-12.500" fill="#f3f3f3" stroke="#222" stroke-width="0.9"/><path d="M578.3 585.6h8.200" stroke="#222" stroke-width="0.9"/><circle cx="576.8" cy="564.1" r="2.4" fill="#fff" stroke="#ff1a1a" stroke-width="1.100"/><text x="576.8" y="564.95" font-size="2.500" font-weight="bold" text-anchor="middle" fill="#ff1a1a" font-family="Liberation Sans, sans-serif">9</text><circle cx="580.8" cy="577.4" r="2.4" fill="#fff" stroke="#ff1a1a" stroke-width="1.100"/><text x="580.8" y="578.25" font-size="2.500" font-weight="bold" text-anchor="middle" fill="#ff1a1a" font-family="Liberation Sans, sans-serif">4</text><circle cx="580.8" cy="592.9" r="2.4" fill="#fff" stroke="#ff1a1a" stroke-width="1.100"/><text x="580.8" y="593.75" font-size="2.500" font-weight="bold" text-anchor="middle" fill="#ff1a1a" font-family="Liberation Sans, sans-serif">5</text><circle cx="564.7" cy="585.2" r="5.7" fill="#fff" stroke="#111" stroke-width="0.9"/><path d="M562.1 580.2v10.0M567.3 580.2v10.0" stroke="#111" stroke-width="0.8"/><rect x="881.4" y="497.2" width="20.2" height="12.2" rx="1" fill="#f3f3f3" stroke="#222" stroke-width="0.9"/><path d="M901.6 509.4v31H889.9v-2.500h3.500c-4.500-4-4.500-8.500 0-12.500h-3.500 3.500c-4.500-4-4.500-8.500 0-12.500" fill="#f3f3f3" stroke="#222" stroke-width="0.9"/><path d="M893.4 524.9h8.200" stroke="#222" stroke-width="0.9"/><circle cx="891.9" cy="503.4" r="2.4" fill="#fff" stroke="#ff1a1a" stroke-width="1.100"/><text x="891.9" y="504.25" font-size="2.500" font-weight="bold" text-anchor="middle" fill="#ff1a1a" font-family="Liberation Sans, sans-serif">9</text><circle cx="895.9" cy="516.7" r="2.4" fill="#fff" stroke="#ff1a1a" stroke-width="1.100"/><text x="895.9" y="517.55" font-size="2.500" font-weight="bold" text-anchor="middle" fill="#ff1a1a" font-family="Liberation Sans, sans-serif">4</text><circle cx="895.9" cy="532.2" r="2.4" fill="#fff" stroke="#ff1a1a" stroke-width="1.100"/><text x="895.9" y="533.05" font-size="2.500" font-weight="bold" text-anchor="middle" fill="#ff1a1a" font-family="Liberation Sans, sans-serif">5</text><circle cx="879.8" cy="524.5" r="5.7" fill="#fff" stroke="#111" stroke-width="0.9"/><path d="M877.2 519.5v10.0M882.4 519.5v10.0" stroke="#111" stroke-width="0.8"/><path d="M863.800 479.800h10.700v11.300h-10.700zM863.800 479.800l10.700 11.300M874.500 479.800l-10.700 11.300" fill="#fff" stroke="#111" stroke-width="1"/><g><path d="M947.8 504.2v-5.5a3.8 2.500 0 0 1 7.6 0v5.5z" fill="#fff" stroke="#000" stroke-width="1.250"/><path d="M947.8 499.8h7.6" stroke="#000" stroke-width="1.400"/><rect x="946.6" y="504.2" width="10" height="36.6" fill="#fff" stroke="#000" stroke-width="1.250"/><path d="M946.6 508.3h10M946.6 512.3h10M946.6 516.4h10M946.6 520.5h10M946.6 524.5h10M946.6 528.6h10M946.6 532.7h10M946.6 536.7h10" stroke="#000" stroke-width="1.100"/></g><g><path d="M949.0 565.3v-3.5a2.5 2.500 0 0 1 5.0 0v3.5z" fill="#fff" stroke="#000" stroke-width="1.250"/><path d="M949.0 562.0h5.0" stroke="#000" stroke-width="1.400"/><rect x="947.8" y="565.3" width="7.4" height="15.6" fill="#fff" stroke="#000" stroke-width="1.250"/><rect x="949.0" y="560.5" width="5.0" height="3.0" fill="#111"/></g><g transform="rotate(-82.5 547 680)"><path d="M544.2 668.0v-8.5a3.0 2.500 0 0 1 6.0 0v8.5z" fill="#fff" stroke="#000" stroke-width="1.250"/><path d="M544.2 662.0h6.0" stroke="#000" stroke-width="1.400"/><rect x="543.0" y="668.0" width="8.4" height="35.0" fill="#fff" stroke="#000" stroke-width="1.250"/><path d="M543.0 672.4h8.4M543.0 676.8h8.4M543.0 681.1h8.4M543.0 685.5h8.4M543.0 689.9h8.4M543.0 694.2h8.4M543.0 698.6h8.4" stroke="#000" stroke-width="1.100"/></g><g transform="rotate(-82.5 598 687.7)"><path d="M595.7 683.3v-4.0a2.7 2.500 0 0 1 5.4 0v4.0z" fill="#fff" stroke="#000" stroke-width="1.250"/><path d="M595.7 679.7h5.4" stroke="#000" stroke-width="1.400"/><rect x="594.5" y="683.3" width="7.8" height="16.0" fill="#fff" stroke="#000" stroke-width="1.250"/><rect x="595.7" y="678.0" width="5.4" height="3.2" fill="#111"/></g><circle cx="543.1" cy="404.3" r="9.4" fill="none" stroke="#111" stroke-width="0.9"/><circle cx="543.1" cy="404.3" r="4.3" fill="none" stroke="#ff1a1a" stroke-width="1" stroke-dasharray="2.6 0.7 0.7 0.7"/><path d="M541.3 404.3h3.6M543.1 402.5v3.6" stroke="#111" stroke-width="0.8" fill="none"/><circle cx="566.4" cy="407.5" r="13.2" fill="none" stroke="#111" stroke-width="0.9"/><circle cx="566.4" cy="407.5" r="5.5" fill="none" stroke="#ff1a1a" stroke-width="1" stroke-dasharray="2.6 0.7 0.7 0.7"/><path d="M564.1 407.5h4.6M566.4 405.2v4.6" stroke="#111" stroke-width="0.8" fill="none"/><circle cx="947.5" cy="345.3" r="17" fill="none" stroke="#111" stroke-width="0.9"/><circle cx="947.5" cy="345.3" r="7.3" fill="none" stroke="#ff1a1a" stroke-width="1" stroke-dasharray="2.6 0.7 0.7 0.7"/><path d="M944.4 345.3h6.1M947.5 342.2v6.1" stroke="#111" stroke-width="0.8" fill="none"/><circle cx="977.1" cy="362.3" r="21.2" fill="none" stroke="#111" stroke-width="0.9"/><circle cx="977.1" cy="362.3" r="9" fill="none" stroke="#ff1a1a" stroke-width="1" stroke-dasharray="2.6 0.7 0.7 0.7"/><path d="M973.3 362.3h7.6M977.1 358.5v7.6" stroke="#111" stroke-width="0.8" fill="none"/><circle cx="593.4" cy="531.7" r="13.2" fill="none" stroke="#111" stroke-width="0.9"/><circle cx="593.4" cy="531.7" r="5.7" fill="none" stroke="#ff1a1a" stroke-width="1" stroke-dasharray="2.6 0.7 0.7 0.7"/><path d="M591.0 531.7h4.8M593.4 529.3v4.8" stroke="#111" stroke-width="0.8" fill="none"/><circle cx="616.3" cy="520.7" r="17" fill="none" stroke="#111" stroke-width="0.9"/><circle cx="616.3" cy="520.7" r="7.3" fill="none" stroke="#ff1a1a" stroke-width="1" stroke-dasharray="2.6 0.7 0.7 0.7"/><path d="M613.2 520.7h6.1" stroke="#333" stroke-width="0.8" fill="none"/><circle cx="861.2" cy="642.4" r="17.1" fill="none" stroke="#111" stroke-width="0.9"/><circle cx="861.2" cy="642.4" r="7.1" fill="none" stroke="#ff1a1a" stroke-width="1" stroke-dasharray="2.6 0.7 0.7 0.7"/><path d="M858.2 642.4h6.0" stroke="#333" stroke-width="0.8" fill="none"/><rect x="471" y="321.200" width="21" height="21" fill="#12a04a" stroke="#111" stroke-width="1"/><g stroke="#fff" stroke-width="0.9" fill="none"><path d="M473 323.200l4 4m0-2.800v2.800h-2.800M490 323.200l-4 4m0-2.800v2.800h2.800M473 340.200l4-4m0 2.800v-2.800h-2.800M490 340.200l-4-4m0 2.800v-2.800h2.800"/></g><g fill="#fff"><circle cx="479.600" cy="327.600" r="1"/><circle cx="483.400" cy="327.600" r="1"/><rect x="478.300" y="329" width="2.600" height="7" rx="0.600"/><rect x="482.100" y="329" width="2.600" height="7" rx="0.600"/></g><path d="M445 311.500H1066.800" stroke="#18a558" stroke-width="1.100" stroke-dasharray="6 3" fill="none"/><path d="M670.300 311.500V343.200H711.900V629.200L916.200 658.400H992.400" stroke="#18a558" stroke-width="1.100" stroke-dasharray="6 3" fill="none"/><path d="M706 414.500H900.400V469.700H975V539H993" stroke="#18a558" stroke-width="1.100" stroke-dasharray="6 3" fill="none"/><path d="M820 645.600" stroke="#18a558" stroke-width="1.100" stroke-dasharray="6 3" fill="none"/><path d="M952.300 658.400V719.500L1071 735.300" stroke="#18a558" stroke-width="1.100" stroke-dasharray="6 3" fill="none"/><path d="M694.2 384.1L701.8 391.7L709.4 384.1M701.8 391.7v-7" fill="none" stroke="#18a558" stroke-width="1.6" stroke-linejoin="miter"/><path d="M695.5 534.9L701.9 541.3L708.3 534.9M701.9 541.3v-6" fill="none" stroke="#18a558" stroke-width="1.5" stroke-linejoin="miter"/><path d="M803.1 406.8L810.9 414.6L803.1 422.4" fill="none" stroke="#18a558" stroke-width="1.6" stroke-linejoin="miter"/><path d="M993.8 531.0L1001.8 539.0L993.8 547.0M1001.8 539.0h-20" fill="none" stroke="#18a558" stroke-width="1.7" stroke-linejoin="miter"/><path d="M742.1 628.0L748.7 634.6L742.1 641.2" fill="none" stroke="#18a558" stroke-width="1.5" stroke-linejoin="miter"/><path d="M984.3 650.5L992.5 642.3L1000.7 650.5M992.5 642.3v16" fill="none" stroke="#18a558" stroke-width="1.7" stroke-linejoin="miter"/><path d="M944.1 705.3L952.3 697.1L960.5 705.3M952.3 697.1v14" fill="none" stroke="#18a558" stroke-width="1.7" stroke-linejoin="miter"/><path d="M848.0 382.0L839.6 390.4L848.0 398.8M839.6 390.4h18" fill="none" stroke="#9a1414" stroke-width="1.9" stroke-linejoin="miter"/><path d="M858 390.400H880L910.800 401.400V462.500H941V719.800L450.500 655.200" stroke="#b02c2c" stroke-width="1.300" stroke-dasharray="9 4" fill="none"/><path d="M882.500 547H915.800V703.600L445 644.900M905 608.600H915.800" stroke="#3d26f5" stroke-width="1.400" stroke-dasharray="6 3" fill="none"/><path d="M879 545.300l3 3.400M882 545.300l-3 3.400" stroke="#3d26f5" stroke-width="0.8"/><circle cx="915.900" cy="674.500" r="4.300" fill="#fff" stroke="#3d26f5" stroke-width="1"/><path d="M913.300 671.300h5.200l-5.200 6.400h5.200z" fill="#3d26f5" stroke="#3d26f5" stroke-width="0.600" stroke-linejoin="round"/><path d="M1001.200 629V714.300" stroke="#fff04a" stroke-width="1.300" stroke-dasharray="6 2.500" fill="none"/><path d="M989 714.300h5M999.500 714.300h3.500" stroke="#e6d94a" stroke-width="1"/><path d="M1012.200 598V714" stroke="#8d7364" stroke-width="1" stroke-dasharray="6 2.500" fill="none"/><path d="M995.500 621.500l5.200 8h-10.400z" fill="#ffe81a" stroke="#111" stroke-width="0.6"/><path d="M995.500 624v3.400" stroke="#111" stroke-width="0.7"/><path d="M555.400 386V319.700H642.200L655.700 331.500L660.800 322.500L666.400 331.500L679 319.700L956 312.200L1071.800 410.800L1071.500 709L977.300 699.200L947.100 663.500L941.600 671L936.100 663.500L912.700 687.100L445 626.400V414.800L483.500 386H555.400V419.400H620.600L628 413L632 419.400L636 413L643 419.400" stroke="#ff1a1a" stroke-width="1.450" stroke-dasharray="10.500 1.900 1.400 1.900" fill="none"/><circle cx="660.800" cy="320.600" r="0.700" fill="#ff1a1a"/><path d="M920.500 414.300L927.900 420.800L920.500 424.500L927.900 427.800L920.500 435.700" fill="none" stroke="#ff1a1a" stroke-width="1"/><path d="M1041.600 386.900H920.400V440.500A9.300 9.300 0 0 0 929.700 449.800H1065.600" stroke="#ff1a1a" stroke-width="1.400" stroke-dasharray="4 0.900 0.900 0.900 0.900 0.900" fill="none"/><text x="660.5" y="361.5" font-size="4.3" text-anchor="middle" fill="#555" font-family="Liberation Sans, sans-serif" >PAVED</text><text x="660.5" y="366.7" font-size="4.3" text-anchor="middle" fill="#555" font-family="Liberation Sans, sans-serif" >AREA</text><text x="793.0" y="390.0" font-size="4.3" text-anchor="middle" fill="#555" font-family="Liberation Sans, sans-serif" >PAVED</text><text x="793.0" y="395.2" font-size="4.3" text-anchor="middle" fill="#555" font-family="Liberation Sans, sans-serif" >AREA</text><text x="872.4" y="357.3" font-size="4.3" text-anchor="middle" fill="#555" font-family="Liberation Sans, sans-serif" >LOADING</text><text x="872.4" y="362.5" font-size="4.3" text-anchor="middle" fill="#555" font-family="Liberation Sans, sans-serif" >AREA</text><text x="995.0" y="415.2" font-size="4.3" text-anchor="middle" fill="#555" font-family="Liberation Sans, sans-serif" >GENERAL</text><text x="995.0" y="420.4" font-size="4.3" text-anchor="middle" fill="#555" font-family="Liberation Sans, sans-serif" >STORAGE</text><text x="995.0" y="425.6" font-size="4.3" text-anchor="middle" fill="#555" font-family="Liberation Sans, sans-serif" >COMPOUND</text><text x="928.0" y="503.5" font-size="4.3" text-anchor="middle" fill="#555" font-family="Liberation Sans, sans-serif" >PAVED</text><text x="928.0" y="508.7" font-size="4.3" text-anchor="middle" fill="#555" font-family="Liberation Sans, sans-serif" >AREA</text><text x="660.5" y="584.5" font-size="4.3" text-anchor="middle" fill="#555" font-family="Liberation Sans, sans-serif" >PAVED</text><text x="660.5" y="589.7" font-size="4.3" text-anchor="middle" fill="#555" font-family="Liberation Sans, sans-serif" >AREA</text><rect x="645.400" y="463.900" width="30.200" height="17.300" fill="#fff"/><text x="660.5" y="469.3" font-size="3.9" text-anchor="middle" fill="#555" font-family="Liberation Sans, sans-serif" >FUTURE</text><text x="660.5" y="474.4" font-size="3.9" text-anchor="middle" fill="#555" font-family="Liberation Sans, sans-serif" >ROAD</text><text x="660.5" y="479.5" font-size="3.9" text-anchor="middle" fill="#555" font-family="Liberation Sans, sans-serif" >CONNECTION</text><text x="0.0" y="0.0" font-size="4.1" text-anchor="middle" fill="#555" font-family="Liberation Sans, sans-serif" transform="translate(932.400,598) rotate(90)">ROADWAY</text></g><path d="M546 288.200H566L589.900 336" stroke="#222" stroke-width="0.7" fill="none"/><text x="545.0" y="282.1" font-size="4.3" text-anchor="end" fill="#3c3c3c" font-family="Liberation Sans, sans-serif" >Garage built</text><text x="545.0" y="287.4" font-size="4.3" text-anchor="end" fill="#3c3c3c" font-family="Liberation Sans, sans-serif" >first and used</text><text x="545.0" y="292.6" font-size="4.3" text-anchor="end" fill="#3c3c3c" font-family="Liberation Sans, sans-serif" >as a lock up</text><text x="545.0" y="297.9" font-size="4.3" text-anchor="end" fill="#3c3c3c" font-family="Liberation Sans, sans-serif" >store</text><path d="M706.100 288.400H689.100L675.900 317.400" stroke="#222" stroke-width="0.7" fill="none"/><circle cx="675.900" cy="317.400" r="1" fill="#222"/><text x="706.7" y="290.1" font-size="4.3" text-anchor="start" fill="#3c3c3c" font-family="Liberation Sans, sans-serif" >Secondary Site Access</text><path d="M985.600 358.300H1024.900" stroke="#222" stroke-width="0.7" fill="none"/><circle cx="985.600" cy="358.300" r="1.200" fill="#222"/><text x="1025.2" y="359.8" font-size="4.3" text-anchor="start" fill="#3c3c3c" font-family="Liberation Sans, sans-serif" >protective fencing</text><path d="M1069.500 582.600H1079.500" stroke="#222" stroke-width="0.7" fill="none"/><circle cx="1069.500" cy="582.600" r="1.200" fill="#222"/><text x="1079.8" y="576.5" font-size="4.3" text-anchor="start" fill="#3c3c3c" font-family="Liberation Sans, sans-serif" >close boarded</text><text x="1079.8" y="581.8" font-size="4.3" text-anchor="start" fill="#3c3c3c" font-family="Liberation Sans, sans-serif" >hoarding with</text><text x="1079.8" y="587.0" font-size="4.3" text-anchor="start" fill="#3c3c3c" font-family="Liberation Sans, sans-serif" >lockable entrance</text><text x="1079.8" y="592.2" font-size="4.3" text-anchor="start" fill="#3c3c3c" font-family="Liberation Sans, sans-serif" >gates</text><path d="M1012 629.600H1089.400" stroke="#222" stroke-width="0.7" fill="none"/><circle cx="1012" cy="629.600" r="1.200" fill="#222"/><text x="1089.6" y="631.1" font-size="4.3" text-anchor="start" fill="#3c3c3c" font-family="Liberation Sans, sans-serif" >Communication line</text><path d="M991 705.800H1079" stroke="#222" stroke-width="0.7" fill="none"/><circle cx="991" cy="705.800" r="1.200" fill="#222"/><text x="1079.4" y="707.3" font-size="4.3" text-anchor="start" fill="#3c3c3c" font-family="Liberation Sans, sans-serif" >Electricity line</text><path d="M877.400 699.200V717.700H860.500" stroke="#222" stroke-width="0.7" fill="none"/><circle cx="877.400" cy="699.200" r="1.200" fill="#222"/><text x="860.0" y="716.9" font-size="4.3" text-anchor="end" fill="#3c3c3c" font-family="Liberation Sans, sans-serif" >Permanent</text><text x="860.0" y="722.0" font-size="4.3" text-anchor="end" fill="#3c3c3c" font-family="Liberation Sans, sans-serif" >water supply</text><path d="M958.700 675.600L965.900 738.300H975.900" stroke="#222" stroke-width="0.7" fill="none"/><circle cx="958.700" cy="675.600" r="1.200" fill="#222"/><text x="976.2" y="732.3" font-size="4.3" text-anchor="start" fill="#3c3c3c" font-family="Liberation Sans, sans-serif" >Main Site access / exit</text><text x="976.2" y="737.5" font-size="4.3" text-anchor="start" fill="#3c3c3c" font-family="Liberation Sans, sans-serif" >for material delivery,</text><text x="976.2" y="742.8" font-size="4.3" text-anchor="start" fill="#3c3c3c" font-family="Liberation Sans, sans-serif" >visitors and</text><text x="976.2" y="748.0" font-size="4.3" text-anchor="start" fill="#3c3c3c" font-family="Liberation Sans, sans-serif" >construction workers</text><path d="M440.400 311.500H445" stroke="#18a558" stroke-width="1.100"/><rect x="444.8" y="267.6" width="681.1" height="489.6" fill="none" stroke="#1c1c1c" stroke-width="1.300"/><text x="1178.2" y="174.900" font-size="14.500" font-weight="bold" fill="#151515" font-family="Liberation Sans, sans-serif" textLength="86.500" lengthAdjust="spacingAndGlyphs">FOREST BUILDING</text><text x="1178.2" y="200.600" font-size="14.500" font-weight="bold" fill="#151515" font-family="Liberation Sans, sans-serif" textLength="44.700" lengthAdjust="spacingAndGlyphs">COMPLEX</text><text x="1178.2" y="226" font-size="4.600" font-weight="bold" fill="#222" font-family="Liberation Sans, sans-serif" textLength="23.2" lengthAdjust="spacingAndGlyphs">Project address:</text><path d="M1178.2 227.6H1272.5" stroke="#8c8c8c" stroke-width="0.800"/><text x="1178.2" y="237" font-size="4.600" fill="#8a8a8a" font-family="Liberation Sans, sans-serif" textLength="75" lengthAdjust="spacingAndGlyphs">Forest Road 12, Mountain Town, State, 296DB Code</text><path d="M1178.2 238.6H1272.5" stroke="#8c8c8c" stroke-width="0.800"/><path d="M1178.2 249.9H1272.5" stroke="#8c8c8c" stroke-width="0.800"/><text x="1178.2" y="259.4" font-size="4.600" font-weight="bold" fill="#222" font-family="Liberation Sans, sans-serif" textLength="21.8" lengthAdjust="spacingAndGlyphs">Project number:</text><text x="1251.7" y="259.4" font-size="4.600" fill="#8a8a8a" font-family="Liberation Sans, sans-serif" textLength="20.8" lengthAdjust="spacingAndGlyphs">CAB-2024-01</text><path d="M1178.2 261H1272.5" stroke="#8c8c8c" stroke-width="0.800"/><path d="M1178.2 272.1H1272.5" stroke="#8c8c8c" stroke-width="0.800"/><text x="1178.2" y="281.8" font-size="4.600" font-weight="bold" fill="#222" font-family="Liberation Sans, sans-serif" textLength="21.8" lengthAdjust="spacingAndGlyphs">Building phase:</text><path d="M1178.2 283.4H1272.5" stroke="#8c8c8c" stroke-width="0.800"/><path d="M1178.2 294.5H1272.5" stroke="#8c8c8c" stroke-width="0.800"/><text x="1178.2" y="304" font-size="4.600" font-weight="bold" fill="#222" font-family="Liberation Sans, sans-serif" textLength="17.4" lengthAdjust="spacingAndGlyphs">Client name:</text><path d="M1178.2 305.6H1272.5" stroke="#8c8c8c" stroke-width="0.800"/><path d="M1178.2 316.6H1272.5" stroke="#8c8c8c" stroke-width="0.800"/><text x="1178.2" y="341.2" font-size="4.600" font-weight="bold" fill="#222" font-family="Liberation Sans, sans-serif" textLength="23.2" lengthAdjust="spacingAndGlyphs">Revision number:</text><text x="1262.4" y="341.2" font-size="4.600" fill="#8a8a8a" font-family="Liberation Sans, sans-serif" textLength="10.1" lengthAdjust="spacingAndGlyphs">Rev 02</text><path d="M1178.2 342.8H1272.5" stroke="#8c8c8c" stroke-width="0.800"/><text x="1178.2" y="352.1" font-size="4.600" font-weight="bold" fill="#222" font-family="Liberation Sans, sans-serif" textLength="8.7" lengthAdjust="spacingAndGlyphs">Notes:</text><path d="M1178.2 353.7H1272.5" stroke="#8c8c8c" stroke-width="0.800"/><path d="M1178.2 365H1272.5" stroke="#8c8c8c" stroke-width="0.800"/><text x="1178.2" y="374.3" font-size="4.600" font-weight="bold" fill="#222" font-family="Liberation Sans, sans-serif" textLength="20.3" lengthAdjust="spacingAndGlyphs">Revision date:</text><text x="1248.0" y="374.3" font-size="4.600" fill="#8a8a8a" font-family="Liberation Sans, sans-serif" textLength="24.5" lengthAdjust="spacingAndGlyphs">October 8, 2024</text><path d="M1178.2 375.9H1272.5" stroke="#8c8c8c" stroke-width="0.800"/><path d="M1178.2 386.9H1272.5" stroke="#8c8c8c" stroke-width="0.800"/><text x="1178.2" y="430.2" font-size="4.600" font-weight="bold" fill="#222" font-family="Liberation Sans, sans-serif" textLength="27.6" lengthAdjust="spacingAndGlyphs">Construction notes:</text><path d="M1178.2 432H1272.5" stroke="#8c8c8c" stroke-width="0.800"/><text x="1178.2" y="449.9" font-size="6.0" text-anchor="start" fill="#6e6e6e" font-family="Liberation Sans, sans-serif" >The contractor is responsible for</text><text x="1178.2" y="457.3" font-size="6.0" text-anchor="start" fill="#6e6e6e" font-family="Liberation Sans, sans-serif" >site preparation, including</text><text x="1178.2" y="464.6" font-size="6.0" text-anchor="start" fill="#6e6e6e" font-family="Liberation Sans, sans-serif" >clearing, grading, and establishing</text><text x="1178.2" y="472.0" font-size="6.0" text-anchor="start" fill="#6e6e6e" font-family="Liberation Sans, sans-serif" >temporary utilities, ensuring</text><text x="1178.2" y="479.3" font-size="6.0" text-anchor="start" fill="#6e6e6e" font-family="Liberation Sans, sans-serif" >compliance with all local building</text><text x="1178.2" y="486.7" font-size="6.0" text-anchor="start" fill="#6e6e6e" font-family="Liberation Sans, sans-serif" >codes, zoning laws, and</text><text x="1178.2" y="494.1" font-size="6.0" text-anchor="start" fill="#6e6e6e" font-family="Liberation Sans, sans-serif" >environmental regulations.</text><text x="1178.2" y="508.7" font-size="6.0" text-anchor="start" fill="#6e6e6e" font-family="Liberation Sans, sans-serif" >All construction activities must</text><text x="1178.2" y="516.1" font-size="6.0" text-anchor="start" fill="#6e6e6e" font-family="Liberation Sans, sans-serif" >adhere to safety standards, and</text><text x="1178.2" y="523.4" font-size="6.0" text-anchor="start" fill="#6e6e6e" font-family="Liberation Sans, sans-serif" >the contractor must implement</text><text x="1178.2" y="530.8" font-size="6.0" text-anchor="start" fill="#6e6e6e" font-family="Liberation Sans, sans-serif" >necessary measures in</text><text x="1178.2" y="538.1" font-size="6.0" text-anchor="start" fill="#6e6e6e" font-family="Liberation Sans, sans-serif" >accordance with OSHA guidelines.</text><text x="1178.2" y="552.6" font-size="6.0" text-anchor="start" fill="#6e6e6e" font-family="Liberation Sans, sans-serif" >Existing utilities must be</text><text x="1178.2" y="560.0" font-size="6.0" text-anchor="start" fill="#6e6e6e" font-family="Liberation Sans, sans-serif" >protected, and any changes to the</text><text x="1178.2" y="567.3" font-size="6.0" text-anchor="start" fill="#6e6e6e" font-family="Liberation Sans, sans-serif" >plans require approval from the</text><text x="1178.2" y="574.7" font-size="6.0" text-anchor="start" fill="#6e6e6e" font-family="Liberation Sans, sans-serif" >architect or relevant authorities.</text><text x="1178.2" y="582.0" font-size="6.0" text-anchor="start" fill="#6e6e6e" font-family="Liberation Sans, sans-serif" >The contractor is also responsible</text><text x="1178.2" y="589.4" font-size="6.0" text-anchor="start" fill="#6e6e6e" font-family="Liberation Sans, sans-serif" >for maintaining site access and</text><text x="1178.2" y="596.8" font-size="6.0" text-anchor="start" fill="#6e6e6e" font-family="Liberation Sans, sans-serif" >security throughout the project</text><text x="1178.2" y="604.1" font-size="6.0" text-anchor="start" fill="#6e6e6e" font-family="Liberation Sans, sans-serif" >and managing waste in an</text><text x="1178.2" y="611.5" font-size="6.0" text-anchor="start" fill="#6e6e6e" font-family="Liberation Sans, sans-serif" >environmentally responsible</text><text x="1178.2" y="618.8" font-size="6.0" text-anchor="start" fill="#6e6e6e" font-family="Liberation Sans, sans-serif" >manner.</text><text x="1178.2" y="633.0" font-size="6.0" text-anchor="start" fill="#6e6e6e" font-family="Liberation Sans, sans-serif" >Additionally, weather conditions</text><text x="1178.2" y="640.4" font-size="6.0" text-anchor="start" fill="#6e6e6e" font-family="Liberation Sans, sans-serif" >may cause delays, and the</text><text x="1178.2" y="647.7" font-size="6.0" text-anchor="start" fill="#6e6e6e" font-family="Liberation Sans, sans-serif" >contractor should adjust the</text><text x="1178.2" y="655.1" font-size="6.0" text-anchor="start" fill="#6e6e6e" font-family="Liberation Sans, sans-serif" >project schedule accordingly.</text><text x="1178.2" y="687.8" font-size="4.600" font-weight="bold" fill="#222" font-family="Liberation Sans, sans-serif" textLength="8.7" lengthAdjust="spacingAndGlyphs">Scale:</text><path d="M1178.2 689.4H1272.5" stroke="#8c8c8c" stroke-width="0.800"/><circle cx="1225.200" cy="712.100" r="10.800" fill="none" stroke="#ff1a1a" stroke-width="0.9"/><path d="M1225.200 712.100V701.300" stroke="#ff1a1a" stroke-width="0.9"/><path d="M1178.2 734.2H1272.5" stroke="#8c8c8c" stroke-width="0.800"/><text x="1178.2" y="743.6" font-size="4.600" font-weight="bold" fill="#222" font-family="Liberation Sans, sans-serif" textLength="65.5" lengthAdjust="spacingAndGlyphs">Master Bedroom &amp; Bathroom Interior Design</text><path d="M1178.2 745H1272.5" stroke="#8c8c8c" stroke-width="0.800"/><path d="M1178.2 756.1H1272.5" stroke="#8c8c8c" stroke-width="0.800"/><path d="M1178.2 767.2H1272.5" stroke="#8c8c8c" stroke-width="0.800"/><text x="1178.2" y="777.2" font-size="4.600" font-weight="bold" fill="#222" font-family="Liberation Sans, sans-serif" textLength="15.9" lengthAdjust="spacingAndGlyphs">Created by:</text><text x="1253.5" y="777.200" font-size="4.600" font-weight="bold" fill="#222" font-family="Liberation Sans, sans-serif" textLength="19" lengthAdjust="spacingAndGlyphs">Rayon.design</text><path d="M1178.2 778.6H1272.5" stroke="#8c8c8c" stroke-width="0.800"/><path d="M1178.2 789.6H1272.5" stroke="#8c8c8c" stroke-width="0.800"/><rect x="1178" y="807.400" width="94.600" height="66" fill="#d9d9d9"/><text x="1241.500" y="861.200" font-size="23.500" font-weight="bold" fill="#fff" font-family="Liberation Sans, sans-serif" textLength="22.500" lengthAdjust="spacingAndGlyphs">IOI</text></svg>

<div id="chrome">
 <svg width="1747" height="48" viewBox="0 0 1747 48" style="position:absolute;left:0;top:0">
  <g fill="none" stroke="#1f1f1f" stroke-width="1.7" stroke-linecap="round" stroke-linejoin="round">
   <path d="M30.5 23.5H12M20 15l-8.5 8.5L20 32"/>
   <path d="M73.5 17.5A9.3 9.3 0 1 0 75 25M74 11.5v6.3h-6.3"/>
   <path d="M102 22l9-8 9 8v10.5h-6v-7.5h-6v7.5h-6z"/>
  </g>
  <rect x="141.700" y="4.500" width="1392" height="38.500" rx="19.200" fill="#ffffff" stroke="#cfcfcf" stroke-width="1"/>
  <rect x="146.5" y="9" width="28.5" height="29.5" rx="12" fill="#ebebeb"/>
  <g fill="none" stroke="#444" stroke-width="1.4" stroke-linecap="round" stroke-linejoin="round">
   <rect x="154.5" y="21" width="12.5" height="10.5" rx="2.5"/>
   <path d="M157.3 21v-2.4a3.4 3.4 0 0 1 6.8 0V21"/>
  </g>
  <circle cx="160.8" cy="26.2" r="1.1" fill="#444"/>
  <text x="183.600" y="30" font-family="Liberation Sans, sans-serif" font-size="17.200" fill="#6b6b6b" textLength="690" lengthAdjust="spacingAndGlyphs">https://<tspan fill="#111">www.rayon.design</tspan>/app/model/cb9a6ace-b34e-43a8-aef2-140d569e1ec5?tourSlug</text>
  <text x="875.200" y="30" font-family="Liberation Sans, sans-serif" font-size="17.200" fill="#6b6b6b" textLength="573" lengthAdjust="spacingAndGlyphs">=new-expert-tour-mouse&amp;canvas=iz4ssb3vp22&amp;scale=473.2215329107...</text>
  <g fill="none" stroke="#4a4a4a" stroke-width="1.300" stroke-linecap="round" stroke-linejoin="round">
   <path transform="translate(147.100,2.300) scale(0.9)" d="M1470.200 24.300a5.100 5.100 0 1 1 3.300 3.300l-1.300 1.300h-2v2h-2v2l-1 1h-3.200v-3.200z"/>
   <path d="M1510.8 14.4L1513.7 20.8L1520.7 21.6L1515.5 26.3L1516.9 33.2L1510.8 29.7L1504.7 33.2L1506.1 26.3L1500.9 21.6L1507.9 20.8Z"/>
  </g>
  <circle cx="1475.900" cy="21.100" r="0.900" fill="#4a4a4a"/>
  <path d="M1555.300 17.800Q1565.100 12.200 1574.900 17.800Q1576.200 27 1565.100 33.800Q1554 27 1555.300 17.800z" fill="#f4000c"/>
  <path d="M1556.900 18.800Q1565.100 14.200 1573.300 18.800Q1574.200 26.200 1565.100 31.900Q1556 26.200 1556.900 18.800z" fill="none" stroke="#fff" stroke-width="0.6"/>
  <path d="M1562.600 19.600l7.400 4.200-7.400 4.200z" fill="#fff"/>
  <path d="M1620.4 27.9L1614.3 34.0L1605.9 34.0L1599.8 27.9L1599.8 19.5L1605.9 13.4L1614.3 13.4L1620.4 19.5Z" fill="#e40000"/>
  <path transform="translate(161.010,3.900) scale(0.9)" d="M1605.700 29.500c-1.400-3.300-2.300-5.600-1.400-7l1.700 1.800v-7.800a.9.9 0 0 1 1.800 0v5h.7v-6.300a.9.9 0 0 1 1.800 0v6.300h.7v-5.700a.9.9 0 0 1 1.800 0v5.700h.7v-4a.9.9 0 0 1 1.800 0v8c0 2.600-.8 4.200-1.700 5.300z" fill="#fff"/>
  <path d="M1646.500 22a8 8 0 0 0 6 8.500" fill="none" stroke="#e23a2a" stroke-width="1.600"/>
  <path d="M1648.300 21a6.500 6.500 0 0 0 4.800 7.200" fill="none" stroke="#f2c21a" stroke-width="1.600"/>
  <path d="M1650.200 20.500a5 5 0 0 0 3.500 5.500" fill="none" stroke="#3a9ad8" stroke-width="1.500"/>
  <circle cx="1658" cy="21.300" r="7.200" fill="#2c7bd0"/>
  <path d="M1654 17.500c2-2.500 5.500-3 7.500-1.500 1.500 2-1 3.500-3 3s-3 1.500-1.500 3-2 2.500-3.500.5-.8-3.700.5-5z" fill="#8cc63f"/>
  <path d="M1657.300 15.300a4 3 0 0 1 4.500 1" fill="none" stroke="#fff" stroke-width="0.7" opacity=".7"/>
  <path d="M1652 26.800l12.500-2.300-3.300 3 3.300.2-9.700 4.800 1.700-3.700z" fill="#1fa51f"/>
  <path d="M1692.300 20h4a2.500 2.500 0 1 1 5 0h4.200v4.200a2.500 2.500 0 1 1 0 5v4.200h-4.200a2.500 2.500 0 1 0-5 0h-4v-4.200a2.500 2.500 0 1 0 0-5z" fill="none" stroke="#222" stroke-width="1.700" stroke-linejoin="round" transform="translate(0.300,-2.200)"/>
  <path d="M1725.600 14.400v19" stroke="#c9c9c9" stroke-width="1"/>
  <path d="M1749.8 14.4L1752.7 20.8L1759.7 21.6L1754.5 26.3L1755.9 33.2L1749.8 29.7L1743.7 33.2L1745.1 26.3L1739.9 21.6L1746.9 20.8Z" fill="none" stroke="#333" stroke-width="1.500" stroke-linejoin="round"/>
 </svg>
</div>


<div id="sidebar">
 <svg width="51" height="922" viewBox="0 48 51 922" style="position:absolute;left:-1px;top:-1px">
  <path d="M1 99.500H50" stroke="#e6e6ea" stroke-width="1"/>
  <path d="M18.200 69.600h14.600M18.200 74.500h14.600M18.200 79.500h14.600" stroke="#5a5a66" stroke-width="1.400" stroke-linecap="round" fill="none"/><g transform="translate(13.9,113.7) scale(0.96)" fill="none" stroke="#4a4a55" stroke-width="1.4" stroke-linecap="round" stroke-linejoin="round"><path d="M12 2.500l9.500 5.200-9.500 5.200-9.500-5.200z"/><path d="M3.500 12.200l-1 .600 9.500 5.200 9.500-5.200-1-.600"/></g><g transform="translate(13.9,164.1) scale(0.96)" fill="none" stroke="#4a4a55" stroke-width="1.4" stroke-linecap="round" stroke-linejoin="round"><path d="M12 2.800l8 4.500v9.400l-8 4.500-8-4.500V7.300z"/><path d="M4 7.300l8 4.700 8-4.700M12 12v9.200"/></g><g transform="translate(13.9,214.2) scale(0.96)" fill="none" stroke="#4a4a55" stroke-width="1.4" stroke-linecap="round" stroke-linejoin="round"><path d="M10.500 3.500l8 8-7.500 7.500a2 2 0 0 1-2.800 0l-5-5a2 2 0 0 1 0-2.800z"/><path d="M2.800 12.500h14.500"/><path d="M21 16.500c1.200 1.600 1.600 2.400 1.600 3.200a1.600 1.600 0 0 1-3.200 0c0-.800.400-1.600 1.600-3.200z" stroke-width="1.200"/></g><g transform="translate(13.9,263.8) scale(0.96)" fill="none" stroke="#4a4a55" stroke-width="1.4" stroke-linecap="round" stroke-linejoin="round"><path d="M8 6.500a2 2 0 0 1 2-2h6l5 5v8.500a2 2 0 0 1-2 2h-9a2 2 0 0 1-2-2z"/><path d="M15.500 4.500v5.500h5.500"/><path d="M4 8.500v11a3 3 0 0 0 3 3h9"/></g><g transform="translate(13.9,313.9) scale(0.96)" fill="none" stroke="#4a4a55" stroke-width="1.4" stroke-linecap="round" stroke-linejoin="round"><rect x="3" y="4.500" width="18" height="15" rx="1.800"/><path d="M3 10h18M9.500 10v9.500"/></g><g transform="translate(13.9,363.9) scale(0.96)" fill="none" stroke="#4a4a55" stroke-width="1.4" stroke-linecap="round" stroke-linejoin="round"><path d="M12 3.500a8.500 8.500 0 1 1-4.200 15.900L3.500 20.500l1.200-4.100A8.500 8.500 0 0 1 12 3.500z"/><path d="M8.500 10.500h7M8.500 14h4.500"/></g><g transform="translate(14.1,736.4) scale(0.96)" fill="none" stroke="#4a4a55" stroke-width="1.4" stroke-linecap="round" stroke-linejoin="round"><rect x="2.500" y="3.500" width="5" height="17" rx="1.500"/><path d="M11 12h11M18 8l4 4-4 4"/></g><g transform="translate(14.1,785.9) scale(0.96)" fill="none" stroke="#4a4a55" stroke-width="1.4" stroke-linecap="round" stroke-linejoin="round"><circle cx="12" cy="12" r="10.200"/><path d="M12 5.500a6.500 6.500 0 0 1 0 13z" fill="#5a5a66" stroke="none"/></g><g transform="translate(14.1,835.5) scale(0.96)" fill="none" stroke="#4a4a55" stroke-width="1.4" stroke-linecap="round" stroke-linejoin="round"><circle cx="12" cy="12" r="10.200"/></g><text x="25.600" y="852.300" text-anchor="middle" font-size="14" fill="#4a4a55" font-family="Liberation Sans, sans-serif">?</text><g transform="translate(14.1,885.5) scale(0.96)" fill="none" stroke="#4a4a55" stroke-width="1.4" stroke-linecap="round" stroke-linejoin="round"><rect x="2.500" y="3.500" width="5" height="17" rx="1"/><rect x="7.500" y="3.500" width="5" height="17" rx="1"/><path d="M13.500 4.800l4.800-1.300 4.400 16.200-4.800 1.300z"/></g><g transform="translate(14.1,935.6) scale(0.96)" fill="none" stroke="#4a4a55" stroke-width="1.4" stroke-linecap="round" stroke-linejoin="round"><path d="M9 2.500a7 7 0 0 1 6.500 9.500 7 7 0 0 1-10 3L2 16l1-3.500A7 7 0 0 1 9 2.500z"/><path d="M6 7.500h6M6 10.500h4"/><path d="M16.500 11a6 6 0 1 1-1 10.500L22 22.500l-.800-3" /><path d="M14 15.500h4M15 18h3"/></g>
 </svg>
</div>

<div id="rpanel"><div class="avatar">E</div><div class="hsep" style="top:99px;left:1582px;right:0"></div><div style="position:absolute;left:1741.500px;top:64.500px;width:19px;height:19px;border-radius:50%;border:1.500px solid #5a5a66"></div><div class="hd" style="top:115.400px">Model</div><svg class="chev" style="top:119px" width="12" height="12" viewBox="0 0 12 12"><path d="M2.500 4.200l3.500 3.500 3.500-3.500" fill="none" stroke="#4a4a55" stroke-width="1.400" stroke-linecap="round" stroke-linejoin="round"/></svg><div class="lbl" style="top:157.8px">Name</div><div class="box" style="top:150.4px;height:34.5px"></div><div class="val" style="top:157.8px;left:1722.6px;color:#111">Copy</div><div class="lbl" style="top:199.7px">Owner</div><div class="val" style="top:199.7px;left:1722.6px;color:#111">Eva</div><div class="hsep" style="top:238px;left:1607px;right:0"></div><div class="hd" style="top:253.900px">Model Canvas</div><svg class="chev" style="top:257.500px" width="12" height="12" viewBox="0 0 12 12"><path d="M2.500 4.200l3.500 3.500 3.500-3.500" fill="none" stroke="#4a4a55" stroke-width="1.400" stroke-linecap="round" stroke-linejoin="round"/></svg><div class="lbl" style="top:296.0px">Name</div><div class="box" style="top:289.2px;height:34.5px"></div><div class="val" style="top:296.0px;left:1722.6px;color:#111">Model</div><div class="lbl" style="top:338.6px">Active layer</div><div class="box" style="top:331.4px;height:34.5px"></div><div style="position:absolute;left:1729.200px;top:342px;width:3.200px;height:13.500px;border-radius:1.500px;background:#4a4a55"></div><div style="position:absolute;left:1745.300px;top:342px;width:3px;height:13.500px;background:#f0a030"></div><div class="lbl" style="top:380.8px">Wireframe</div><div class="box" style="top:374.2px;height:34.5px"></div><div class="lbl" style="top:423.5px">Grid</div><div class="box" style="top:416.4px;height:34.5px"></div><div class="val" style="top:423.5px;left:1740px;color:#8a8a94">S</div><div class="lbl" style="top:465.7px">Unit</div><div class="box" style="top:459.1px;height:34.5px"></div><div class="val" style="top:465.7px;left:1722.6px;color:#111">Metric</div><div class="lbl" style="top:508.7px">Stroke scale</div><div class="box" style="top:501.6px;height:34.5px"></div><div class="val" style="top:508.7px;left:1721px;color:#111"><span style="color:#6b6b76">1:</span> 40</div><div class="lbl" style="top:550.9px">Background</div><div class="box" style="top:544.3px;height:34.5px"></div><div style="position:absolute;left:1716px;top:549.500px;width:40px;height:24.300px;border-radius:5px;background:#fff"></div><div class="hsep" style="top:589px;left:1607px;right:0"></div><div class="hsep" style="top:921px;left:1582px;right:0"></div><div style="position:absolute;left:1592px;top:930px;width:35px;height:35px;border-radius:8px;background:#edf1ff"></div><svg style="position:absolute;left:1592px;top:930px" width="35" height="35" viewBox="1592 930 35 35"><g transform="translate(1610.700,946.500) rotate(45)" fill="none" stroke="#3b57f0" stroke-width="1.500" stroke-linejoin="round"><path d="M-6.300 0A6.300 6.300 0 0 1 6.300 0V5.600a1 1 0 0 1-1 1H3.600a1 1 0 0 1-1-1V0A2.600 2.600 0 0 0-2.600 0V5.600a1 1 0 0 1-1 1H-5.300a1 1 0 0 1-1-1z"/><path d="M-6.300 3.200H-2.600M2.600 3.200H6.300"/></g></svg><svg style="position:absolute;left:1635px;top:941px" width="14" height="12" viewBox="0 0 14 12"><path d="M2.500 8.200l4.500-4.500 4.500 4.500" fill="none" stroke="#4a4a55" stroke-width="1.500" stroke-linecap="round" stroke-linejoin="round"/></svg><svg style="position:absolute;left:1700px;top:935px" width="47" height="25" viewBox="1700 935 47 25"><path d="M1702.500 952.500v2.300a1 1 0 0 0 1 1h44M1730.700 953.500v2.300" fill="none" stroke="#5a5a66" stroke-width="1.300"/><text x="1743.500" y="947.300" font-size="15" font-family="Liberation Sans, sans-serif" fill="#111">5</text></svg></div>

<div id="toolbar"></div>
<svg width="1747" height="970" viewBox="0 0 1747 970" style="position:absolute;left:0;top:0;pointer-events:none">
<rect x="612" y="874.800" width="35" height="35" rx="7" fill="#edf1ff"/><path d="M621.800 885.400L637.200 891.900L630.700 894.400L628.500 900.200Z" fill="none" stroke="#3b57f0" stroke-width="1.500" stroke-linejoin="round"/><g transform="translate(618.3,918.8) scale(0.92)" fill="none" stroke="#3f3f48" stroke-width="1.500" stroke-linecap="round" stroke-linejoin="round"><path d="M5.500 7.500l5 4.500-5 4.500M13 17h5.500"/></g><rect x="657.3" y="885.400" width="2.200" height="51" rx="1" fill="#e6e6ea"/><g fill="none" stroke="#3f3f48" stroke-width="1.500" stroke-linejoin="round" stroke-linecap="round"><path d="M679 887.800a2.400 2.400 0 0 1 3.300-2.200l12.800 4.800a1.500 1.500 0 0 1 1 1.400v7.600a1.500 1.500 0 0 1-1.500 1.500h-3.200l-11.300-4.200a1.600 1.600 0 0 1-1.100-1.500z"/><path d="M691.300 900.600v-8.200l-12-4.500M691.300 892.300h4.500"/></g><g transform="translate(713.3,881.4) scale(0.92)" fill="none" stroke="#3f3f48" stroke-width="1.500" stroke-linecap="round" stroke-linejoin="round"><path d="M3.500 19h4.500V6.500L13 3.500h5.500V19H21"/><path d="M8 6.500l5 3V21l-5-2M13 3.500v6"/></g><g transform="translate(676.6,918.5) scale(0.92)" fill="none" stroke="#3f3f48" stroke-width="1.500" stroke-linecap="round" stroke-linejoin="round"><path d="M12 5l9 7-9 7-9-7z"/><path d="M7.500 8.500l9 7M16.500 8.500l-9 7"/></g><g transform="translate(713.3,918.8) scale(0.92)" fill="none" stroke="#3f3f48" stroke-width="1.500" stroke-linecap="round" stroke-linejoin="round"><path d="M4 4.500l16 15" stroke-dasharray="2 2.400"/><path d="M2.500 6.500l3.500-3.500M18.500 21.500l3.500-3.500"/></g><path d="M749.0 912.3l3.500-3.500 3.500 3.500" fill="none" stroke="#3f3f48" stroke-width="1.500" stroke-linecap="round" stroke-linejoin="round"/><rect x="772.5" y="885.400" width="2.200" height="51" rx="1" fill="#e6e6ea"/><g transform="translate(791.6,881.4) scale(0.92)" fill="none" stroke="#3f3f48" stroke-width="1.500" stroke-linecap="round" stroke-linejoin="round"><circle cx="5" cy="4.500" r="2"/><circle cx="7" cy="18.500" r="2"/><circle cx="19" cy="12.500" r="2"/><path d="M5.300 6.500l1.400 10M8.800 17.500l8.400-4"/></g><g transform="translate(828.0,881.4) scale(0.92)" fill="none" stroke="#3f3f48" stroke-width="1.500" stroke-linecap="round" stroke-linejoin="round"><circle cx="5" cy="18.500" r="2"/><circle cx="19" cy="4.500" r="2"/><path d="M6.500 17l11-11"/></g><g transform="translate(791.6,918.5) scale(0.92)" fill="none" stroke="#3f3f48" stroke-width="1.500" stroke-linecap="round" stroke-linejoin="round"><circle cx="5" cy="19" r="2"/><circle cx="19" cy="5" r="2"/><path d="M5 17c0-6 4-11.500 12-12"/></g><g transform="translate(828.0,918.8) scale(0.92)" fill="none" stroke="#3f3f48" stroke-width="1.500" stroke-linecap="round" stroke-linejoin="round"><circle cx="12" cy="12" r="8.800"/></g><path d="M864.0 912.3l3.500-3.500 3.500 3.500" fill="none" stroke="#3f3f48" stroke-width="1.500" stroke-linecap="round" stroke-linejoin="round"/><rect x="887.5" y="885.400" width="2.200" height="51" rx="1" fill="#e6e6ea"/><g transform="translate(906.4,881.4) scale(0.92)" fill="none" stroke="#3f3f48" stroke-width="1.500" stroke-linecap="round" stroke-linejoin="round"><path d="M3 7.500v9M21 7.500v9"/><path d="M6.500 12h11" stroke-dasharray="2.200 2.200"/></g><path d="M945 901.200l3.600-9.200h5.200M944.800 896.800l.2 4.500 4.300-1.200" fill="none" stroke="#3f3f48" stroke-width="1.500" stroke-linecap="round" stroke-linejoin="round"/><text x="956.600" y="892.200" font-size="11.500" font-family="Liberation Sans, sans-serif" fill="#3f3f48">A</text><g transform="translate(906.4,918.8) scale(0.92)" fill="none" stroke="#3f3f48" stroke-width="1.500" stroke-linecap="round" stroke-linejoin="round"><path d="M4.500 4.500h15M12 4.500v16"/></g><g transform="translate(943.6,918.8) scale(0.92)" fill="none" stroke="#3f3f48" stroke-width="1.500" stroke-linecap="round" stroke-linejoin="round"><path d="M3.500 20.500L20.500 3.500M13 3.500h7.500V11"/></g><path d="M978.8 912.3l3.500-3.500 3.500 3.500" fill="none" stroke="#3f3f48" stroke-width="1.500" stroke-linecap="round" stroke-linejoin="round"/><rect x="1002.2" y="885.400" width="2.200" height="51" rx="1" fill="#e6e6ea"/><g transform="translate(1021.8,881.4) scale(0.92)" fill="none" stroke="#3f3f48" stroke-width="1.500" stroke-linecap="round" stroke-linejoin="round"><rect x="3.500" y="3.500" width="11.500" height="11.500" rx="2.800"/><rect x="9" y="9" width="11.500" height="11.500" rx="2.800" fill="#fff"/></g><g transform="translate(1058.7,881.4) scale(0.92)" fill="none" stroke="#3f3f48" stroke-width="1.500" stroke-linecap="round" stroke-linejoin="round"><path d="M12 2.500v19M2.500 12h19M9 5.500l3-3 3 3M9 18.500l3 3 3-3M5.500 9l-3 3 3 3M18.500 9l3 3-3 3"/></g><g transform="translate(1096.8,881.4) scale(0.92)" fill="none" stroke="#3f3f48" stroke-width="1.500" stroke-linecap="round" stroke-linejoin="round"><path d="M13.500 3.500L11 2.500 3.500 6.500v9.500l7.500 4.500 7.500-4.500V11"/><path d="M3.500 6.500l7.500 4.500 4-2.400M11 11v9.500M18.500 1.500v6M15.500 4.500h6"/></g><g transform="translate(1021.8,918.5) scale(0.92)" fill="none" stroke="#3f3f48" stroke-width="1.500" stroke-linecap="round" stroke-linejoin="round"><path d="M3 8c8 0 13 5 13 13M3 13.500c5 0 7.500 3 7.500 7.500M13.500 10l7-7M15.500 3h5v5"/></g><g transform="translate(1058.7,918.8) scale(0.92)" fill="none" stroke="#3f3f48" stroke-width="1.500" stroke-linecap="round" stroke-linejoin="round"><circle cx="5.500" cy="6" r="2.600"/><circle cx="5.500" cy="18" r="2.600"/><path d="M7.800 7.500L21 17.500M7.800 16.500L21 6.500"/></g><g transform="translate(1096.8,918.8) scale(0.92)" fill="none" stroke="#3f3f48" stroke-width="1.500" stroke-linecap="round" stroke-linejoin="round"><path d="M3 8V5.500A2.500 2.500 0 0 1 5.500 3H8M16 3h2.500A2.500 2.500 0 0 1 21 5.500V8M21 16v2.500a2.500 2.500 0 0 1-2.500 2.500H16M8 21H5.500A2.500 2.500 0 0 1 3 18.500V16"/><circle cx="10.500" cy="13.500" r="4"/><circle cx="13.500" cy="10.500" r="4"/></g><path d="M1130.9 912.3l3.500-3.500 3.500 3.500" fill="none" stroke="#3f3f48" stroke-width="1.500" stroke-linecap="round" stroke-linejoin="round"/><rect x="1155.3" y="885.400" width="2.200" height="51" rx="1" fill="#e6e6ea"/><g transform="translate(1173.6,881.4) scale(0.92)" fill="none" stroke="#3f3f48" stroke-width="1.500" stroke-linecap="round" stroke-linejoin="round"><path d="M6 3.500h8l5.500 5.500v9a2.500 2.500 0 0 1-2.500 2.500H7A2.500 2.500 0 0 1 4.500 18V6A2.500 2.500 0 0 1 7 3.500z"/><path d="M13.500 3.500v6h6"/></g><g transform="translate(1173.6,918.8) scale(0.92)" fill="none" stroke="#3f3f48" stroke-width="1.500" stroke-linecap="round" stroke-linejoin="round"><rect x="2.500" y="2.500" width="19" height="19" rx="3"/><rect x="7" y="7" width="10" height="10" rx="1" stroke-dasharray="2.500 2.500"/></g><path d="M1208.9 912.3l3.500-3.500 3.500 3.500" fill="none" stroke="#3f3f48" stroke-width="1.500" stroke-linecap="round" stroke-linejoin="round"/><rect x="1231.9" y="885.400" width="2.200" height="51" rx="1" fill="#e6e6ea"/><g transform="translate(1251.1,881.4) scale(0.92)" fill="none" stroke="#3f3f48" stroke-width="1.500" stroke-linecap="round" stroke-linejoin="round"><path d="M12 3a8.800 8 0 1 1-4.200 15.200L3.500 19.500l1.200-3.800A8.800 8 0 0 1 12 3z"/><path d="M8.500 9.500h7.500M8.500 13h5"/></g><g transform="translate(1251.1,918.5) scale(0.92)" fill="none" stroke="#3f3f48" stroke-width="1.500" stroke-linecap="round" stroke-linejoin="round"><ellipse cx="8.500" cy="8" rx="6.500" ry="3.800"/><path d="M2 8v6c0 2.500 3 4 6.500 4H22v-6.500H15M15 8v3.500M11 18v-2.500M14.500 18v-2.500M18 18v-2.500"/></g><path d="M1285.7 912.3l3.500-3.500 3.500 3.500" fill="none" stroke="#3f3f48" stroke-width="1.500" stroke-linecap="round" stroke-linejoin="round"/>
</svg>

</body></html>
